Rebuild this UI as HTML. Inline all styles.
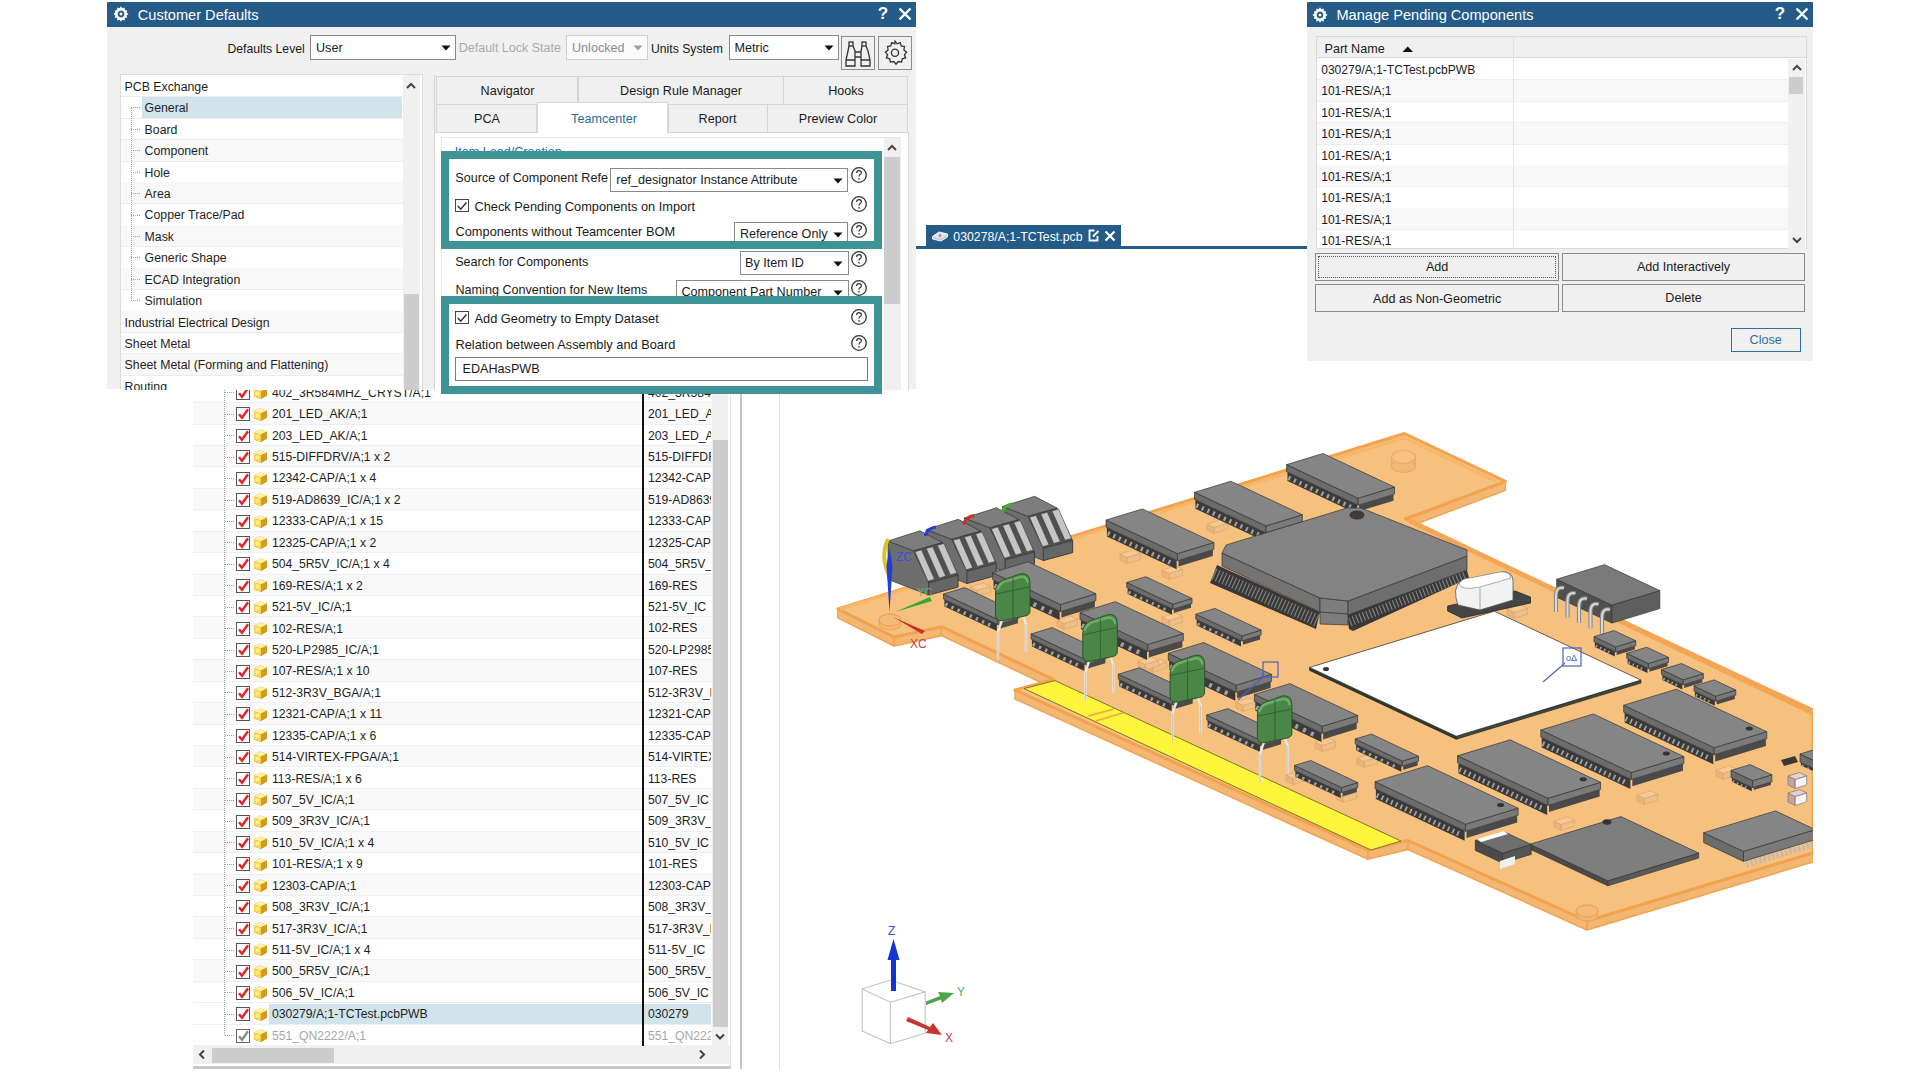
<!DOCTYPE html><html><head><meta charset="utf-8"><style>html,body{margin:0;padding:0;width:1920px;height:1080px;overflow:hidden;background:#fff;font-family:"Liberation Sans", sans-serif;position:relative}div{box-sizing:border-box}</style></head><body>
<div style="position:absolute;left:193px;top:390px;width:538px;height:679px;overflow:hidden;background:#fff">
<div style="position:absolute;left:0.00px;top:12.13px;width:519.00px;height:1.00px;background:#efefef"></div>
<div style="position:absolute;left:32.00px;top:2.40px;width:9.00px;height:1.00px;border-top:1px dotted #a0a0a0"></div>
<div style="position:absolute;left:42.50px;top:-4.00px;width:14.00px;height:14.00px;border:1.6px solid #555;background:#fff"></div>
<svg width="14" height="14" viewBox="0 0 14 14" style="position:absolute;left:42.50px;top:-4.00px"><path d="M3 7.2 L6 10.8 L12 2.2" fill="none" stroke="#e8202a" stroke-width="2.4"/></svg>
<div style="position:absolute;left:59.50px;top:-4.80px;width:15px;height:15px"><svg width="15" height="15" viewBox="0 0 15 15" style="position:absolute;left:0;top:0"><path d="M1 4.5 L7 1.5 L14 3.5 L14 10.5 L8 14 L1 11.5 Z" fill="#c9941c"/><path d="M1 4.5 L7 1.5 L14 3.5 L8 6.5 Z" fill="#fff2a0"/><path d="M1 4.5 L8 6.5 L8 14 L1 11.5 Z" fill="#f5d44a"/><path d="M8 6.5 L14 3.5 L14 10.5 L8 14 Z" fill="#d49a20"/><rect x="2.5" y="6.5" width="4" height="4" fill="#fff6b8" opacity="0.7"/></svg></div>
<div style="position:absolute;left:78.90px;top:-3.23px;font-size:12.2px;line-height:12.2px;color:#1e1e1e;white-space:pre;letter-spacing:0px;">402_3R584MHZ_CRYST/A;1</div>
<div style="position:absolute;left:454.90px;top:-8.30px;width:63px;height:21.43px;overflow:hidden">
<div style="position:absolute;left:0.00px;top:5.07px;font-size:12.2px;line-height:12.2px;color:#1e1e1e;white-space:pre;letter-spacing:0px;">402_3R584MHZ</div>
</div>
<div style="position:absolute;left:0.00px;top:13.13px;width:519.00px;height:21.43px;background:#f9f9f9"></div>
<div style="position:absolute;left:0.00px;top:33.56px;width:519.00px;height:1.00px;background:#efefef"></div>
<div style="position:absolute;left:32.00px;top:23.83px;width:9.00px;height:1.00px;border-top:1px dotted #a0a0a0"></div>
<div style="position:absolute;left:42.50px;top:17.43px;width:14.00px;height:14.00px;border:1.6px solid #555;background:#fff"></div>
<svg width="14" height="14" viewBox="0 0 14 14" style="position:absolute;left:42.50px;top:17.43px"><path d="M3 7.2 L6 10.8 L12 2.2" fill="none" stroke="#e8202a" stroke-width="2.4"/></svg>
<div style="position:absolute;left:59.50px;top:16.63px;width:15px;height:15px"><svg width="15" height="15" viewBox="0 0 15 15" style="position:absolute;left:0;top:0"><path d="M1 4.5 L7 1.5 L14 3.5 L14 10.5 L8 14 L1 11.5 Z" fill="#c9941c"/><path d="M1 4.5 L7 1.5 L14 3.5 L8 6.5 Z" fill="#fff2a0"/><path d="M1 4.5 L8 6.5 L8 14 L1 11.5 Z" fill="#f5d44a"/><path d="M8 6.5 L14 3.5 L14 10.5 L8 14 Z" fill="#d49a20"/><rect x="2.5" y="6.5" width="4" height="4" fill="#fff6b8" opacity="0.7"/></svg></div>
<div style="position:absolute;left:78.90px;top:18.20px;font-size:12.2px;line-height:12.2px;color:#1e1e1e;white-space:pre;letter-spacing:0px;">201_LED_AK/A;1</div>
<div style="position:absolute;left:454.90px;top:13.13px;width:63px;height:21.43px;overflow:hidden">
<div style="position:absolute;left:0.00px;top:5.07px;font-size:12.2px;line-height:12.2px;color:#1e1e1e;white-space:pre;letter-spacing:0px;">201_LED_AK</div>
</div>
<div style="position:absolute;left:0.00px;top:54.99px;width:519.00px;height:1.00px;background:#efefef"></div>
<div style="position:absolute;left:32.00px;top:45.26px;width:9.00px;height:1.00px;border-top:1px dotted #a0a0a0"></div>
<div style="position:absolute;left:42.50px;top:38.86px;width:14.00px;height:14.00px;border:1.6px solid #555;background:#fff"></div>
<svg width="14" height="14" viewBox="0 0 14 14" style="position:absolute;left:42.50px;top:38.86px"><path d="M3 7.2 L6 10.8 L12 2.2" fill="none" stroke="#e8202a" stroke-width="2.4"/></svg>
<div style="position:absolute;left:59.50px;top:38.06px;width:15px;height:15px"><svg width="15" height="15" viewBox="0 0 15 15" style="position:absolute;left:0;top:0"><path d="M1 4.5 L7 1.5 L14 3.5 L14 10.5 L8 14 L1 11.5 Z" fill="#c9941c"/><path d="M1 4.5 L7 1.5 L14 3.5 L8 6.5 Z" fill="#fff2a0"/><path d="M1 4.5 L8 6.5 L8 14 L1 11.5 Z" fill="#f5d44a"/><path d="M8 6.5 L14 3.5 L14 10.5 L8 14 Z" fill="#d49a20"/><rect x="2.5" y="6.5" width="4" height="4" fill="#fff6b8" opacity="0.7"/></svg></div>
<div style="position:absolute;left:78.90px;top:39.63px;font-size:12.2px;line-height:12.2px;color:#1e1e1e;white-space:pre;letter-spacing:0px;">203_LED_AK/A;1</div>
<div style="position:absolute;left:454.90px;top:34.56px;width:63px;height:21.43px;overflow:hidden">
<div style="position:absolute;left:0.00px;top:5.07px;font-size:12.2px;line-height:12.2px;color:#1e1e1e;white-space:pre;letter-spacing:0px;">203_LED_AK</div>
</div>
<div style="position:absolute;left:0.00px;top:55.99px;width:519.00px;height:21.43px;background:#f9f9f9"></div>
<div style="position:absolute;left:0.00px;top:76.42px;width:519.00px;height:1.00px;background:#efefef"></div>
<div style="position:absolute;left:32.00px;top:66.69px;width:9.00px;height:1.00px;border-top:1px dotted #a0a0a0"></div>
<div style="position:absolute;left:42.50px;top:60.29px;width:14.00px;height:14.00px;border:1.6px solid #555;background:#fff"></div>
<svg width="14" height="14" viewBox="0 0 14 14" style="position:absolute;left:42.50px;top:60.29px"><path d="M3 7.2 L6 10.8 L12 2.2" fill="none" stroke="#e8202a" stroke-width="2.4"/></svg>
<div style="position:absolute;left:59.50px;top:59.49px;width:15px;height:15px"><svg width="15" height="15" viewBox="0 0 15 15" style="position:absolute;left:0;top:0"><path d="M1 4.5 L7 1.5 L14 3.5 L14 10.5 L8 14 L1 11.5 Z" fill="#c9941c"/><path d="M1 4.5 L7 1.5 L14 3.5 L8 6.5 Z" fill="#fff2a0"/><path d="M1 4.5 L8 6.5 L8 14 L1 11.5 Z" fill="#f5d44a"/><path d="M8 6.5 L14 3.5 L14 10.5 L8 14 Z" fill="#d49a20"/><rect x="2.5" y="6.5" width="4" height="4" fill="#fff6b8" opacity="0.7"/></svg></div>
<div style="position:absolute;left:78.90px;top:61.06px;font-size:12.2px;line-height:12.2px;color:#1e1e1e;white-space:pre;letter-spacing:0px;">515-DIFFDRV/A;1 x 2</div>
<div style="position:absolute;left:454.90px;top:55.99px;width:63px;height:21.43px;overflow:hidden">
<div style="position:absolute;left:0.00px;top:5.07px;font-size:12.2px;line-height:12.2px;color:#1e1e1e;white-space:pre;letter-spacing:0px;">515-DIFFDRV</div>
</div>
<div style="position:absolute;left:0.00px;top:97.85px;width:519.00px;height:1.00px;background:#efefef"></div>
<div style="position:absolute;left:32.00px;top:88.12px;width:9.00px;height:1.00px;border-top:1px dotted #a0a0a0"></div>
<div style="position:absolute;left:42.50px;top:81.72px;width:14.00px;height:14.00px;border:1.6px solid #555;background:#fff"></div>
<svg width="14" height="14" viewBox="0 0 14 14" style="position:absolute;left:42.50px;top:81.72px"><path d="M3 7.2 L6 10.8 L12 2.2" fill="none" stroke="#e8202a" stroke-width="2.4"/></svg>
<div style="position:absolute;left:59.50px;top:80.92px;width:15px;height:15px"><svg width="15" height="15" viewBox="0 0 15 15" style="position:absolute;left:0;top:0"><path d="M1 4.5 L7 1.5 L14 3.5 L14 10.5 L8 14 L1 11.5 Z" fill="#c9941c"/><path d="M1 4.5 L7 1.5 L14 3.5 L8 6.5 Z" fill="#fff2a0"/><path d="M1 4.5 L8 6.5 L8 14 L1 11.5 Z" fill="#f5d44a"/><path d="M8 6.5 L14 3.5 L14 10.5 L8 14 Z" fill="#d49a20"/><rect x="2.5" y="6.5" width="4" height="4" fill="#fff6b8" opacity="0.7"/></svg></div>
<div style="position:absolute;left:78.90px;top:82.49px;font-size:12.2px;line-height:12.2px;color:#1e1e1e;white-space:pre;letter-spacing:0px;">12342-CAP/A;1 x 4</div>
<div style="position:absolute;left:454.90px;top:77.42px;width:63px;height:21.43px;overflow:hidden">
<div style="position:absolute;left:0.00px;top:5.07px;font-size:12.2px;line-height:12.2px;color:#1e1e1e;white-space:pre;letter-spacing:0px;">12342-CAP</div>
</div>
<div style="position:absolute;left:0.00px;top:98.85px;width:519.00px;height:21.43px;background:#f9f9f9"></div>
<div style="position:absolute;left:0.00px;top:119.28px;width:519.00px;height:1.00px;background:#efefef"></div>
<div style="position:absolute;left:32.00px;top:109.55px;width:9.00px;height:1.00px;border-top:1px dotted #a0a0a0"></div>
<div style="position:absolute;left:42.50px;top:103.15px;width:14.00px;height:14.00px;border:1.6px solid #555;background:#fff"></div>
<svg width="14" height="14" viewBox="0 0 14 14" style="position:absolute;left:42.50px;top:103.15px"><path d="M3 7.2 L6 10.8 L12 2.2" fill="none" stroke="#e8202a" stroke-width="2.4"/></svg>
<div style="position:absolute;left:59.50px;top:102.35px;width:15px;height:15px"><svg width="15" height="15" viewBox="0 0 15 15" style="position:absolute;left:0;top:0"><path d="M1 4.5 L7 1.5 L14 3.5 L14 10.5 L8 14 L1 11.5 Z" fill="#c9941c"/><path d="M1 4.5 L7 1.5 L14 3.5 L8 6.5 Z" fill="#fff2a0"/><path d="M1 4.5 L8 6.5 L8 14 L1 11.5 Z" fill="#f5d44a"/><path d="M8 6.5 L14 3.5 L14 10.5 L8 14 Z" fill="#d49a20"/><rect x="2.5" y="6.5" width="4" height="4" fill="#fff6b8" opacity="0.7"/></svg></div>
<div style="position:absolute;left:78.90px;top:103.92px;font-size:12.2px;line-height:12.2px;color:#1e1e1e;white-space:pre;letter-spacing:0px;">519-AD8639_IC/A;1 x 2</div>
<div style="position:absolute;left:454.90px;top:98.85px;width:63px;height:21.43px;overflow:hidden">
<div style="position:absolute;left:0.00px;top:5.07px;font-size:12.2px;line-height:12.2px;color:#1e1e1e;white-space:pre;letter-spacing:0px;">519-AD8639</div>
</div>
<div style="position:absolute;left:0.00px;top:140.71px;width:519.00px;height:1.00px;background:#efefef"></div>
<div style="position:absolute;left:32.00px;top:130.98px;width:9.00px;height:1.00px;border-top:1px dotted #a0a0a0"></div>
<div style="position:absolute;left:42.50px;top:124.58px;width:14.00px;height:14.00px;border:1.6px solid #555;background:#fff"></div>
<svg width="14" height="14" viewBox="0 0 14 14" style="position:absolute;left:42.50px;top:124.58px"><path d="M3 7.2 L6 10.8 L12 2.2" fill="none" stroke="#e8202a" stroke-width="2.4"/></svg>
<div style="position:absolute;left:59.50px;top:123.78px;width:15px;height:15px"><svg width="15" height="15" viewBox="0 0 15 15" style="position:absolute;left:0;top:0"><path d="M1 4.5 L7 1.5 L14 3.5 L14 10.5 L8 14 L1 11.5 Z" fill="#c9941c"/><path d="M1 4.5 L7 1.5 L14 3.5 L8 6.5 Z" fill="#fff2a0"/><path d="M1 4.5 L8 6.5 L8 14 L1 11.5 Z" fill="#f5d44a"/><path d="M8 6.5 L14 3.5 L14 10.5 L8 14 Z" fill="#d49a20"/><rect x="2.5" y="6.5" width="4" height="4" fill="#fff6b8" opacity="0.7"/></svg></div>
<div style="position:absolute;left:78.90px;top:125.35px;font-size:12.2px;line-height:12.2px;color:#1e1e1e;white-space:pre;letter-spacing:0px;">12333-CAP/A;1 x 15</div>
<div style="position:absolute;left:454.90px;top:120.28px;width:63px;height:21.43px;overflow:hidden">
<div style="position:absolute;left:0.00px;top:5.07px;font-size:12.2px;line-height:12.2px;color:#1e1e1e;white-space:pre;letter-spacing:0px;">12333-CAP</div>
</div>
<div style="position:absolute;left:0.00px;top:141.71px;width:519.00px;height:21.43px;background:#f9f9f9"></div>
<div style="position:absolute;left:0.00px;top:162.14px;width:519.00px;height:1.00px;background:#efefef"></div>
<div style="position:absolute;left:32.00px;top:152.41px;width:9.00px;height:1.00px;border-top:1px dotted #a0a0a0"></div>
<div style="position:absolute;left:42.50px;top:146.01px;width:14.00px;height:14.00px;border:1.6px solid #555;background:#fff"></div>
<svg width="14" height="14" viewBox="0 0 14 14" style="position:absolute;left:42.50px;top:146.01px"><path d="M3 7.2 L6 10.8 L12 2.2" fill="none" stroke="#e8202a" stroke-width="2.4"/></svg>
<div style="position:absolute;left:59.50px;top:145.21px;width:15px;height:15px"><svg width="15" height="15" viewBox="0 0 15 15" style="position:absolute;left:0;top:0"><path d="M1 4.5 L7 1.5 L14 3.5 L14 10.5 L8 14 L1 11.5 Z" fill="#c9941c"/><path d="M1 4.5 L7 1.5 L14 3.5 L8 6.5 Z" fill="#fff2a0"/><path d="M1 4.5 L8 6.5 L8 14 L1 11.5 Z" fill="#f5d44a"/><path d="M8 6.5 L14 3.5 L14 10.5 L8 14 Z" fill="#d49a20"/><rect x="2.5" y="6.5" width="4" height="4" fill="#fff6b8" opacity="0.7"/></svg></div>
<div style="position:absolute;left:78.90px;top:146.78px;font-size:12.2px;line-height:12.2px;color:#1e1e1e;white-space:pre;letter-spacing:0px;">12325-CAP/A;1 x 2</div>
<div style="position:absolute;left:454.90px;top:141.71px;width:63px;height:21.43px;overflow:hidden">
<div style="position:absolute;left:0.00px;top:5.07px;font-size:12.2px;line-height:12.2px;color:#1e1e1e;white-space:pre;letter-spacing:0px;">12325-CAP</div>
</div>
<div style="position:absolute;left:0.00px;top:183.57px;width:519.00px;height:1.00px;background:#efefef"></div>
<div style="position:absolute;left:32.00px;top:173.84px;width:9.00px;height:1.00px;border-top:1px dotted #a0a0a0"></div>
<div style="position:absolute;left:42.50px;top:167.44px;width:14.00px;height:14.00px;border:1.6px solid #555;background:#fff"></div>
<svg width="14" height="14" viewBox="0 0 14 14" style="position:absolute;left:42.50px;top:167.44px"><path d="M3 7.2 L6 10.8 L12 2.2" fill="none" stroke="#e8202a" stroke-width="2.4"/></svg>
<div style="position:absolute;left:59.50px;top:166.64px;width:15px;height:15px"><svg width="15" height="15" viewBox="0 0 15 15" style="position:absolute;left:0;top:0"><path d="M1 4.5 L7 1.5 L14 3.5 L14 10.5 L8 14 L1 11.5 Z" fill="#c9941c"/><path d="M1 4.5 L7 1.5 L14 3.5 L8 6.5 Z" fill="#fff2a0"/><path d="M1 4.5 L8 6.5 L8 14 L1 11.5 Z" fill="#f5d44a"/><path d="M8 6.5 L14 3.5 L14 10.5 L8 14 Z" fill="#d49a20"/><rect x="2.5" y="6.5" width="4" height="4" fill="#fff6b8" opacity="0.7"/></svg></div>
<div style="position:absolute;left:78.90px;top:168.21px;font-size:12.2px;line-height:12.2px;color:#1e1e1e;white-space:pre;letter-spacing:0px;">504_5R5V_IC/A;1 x 4</div>
<div style="position:absolute;left:454.90px;top:163.14px;width:63px;height:21.43px;overflow:hidden">
<div style="position:absolute;left:0.00px;top:5.07px;font-size:12.2px;line-height:12.2px;color:#1e1e1e;white-space:pre;letter-spacing:0px;">504_5R5V_IC</div>
</div>
<div style="position:absolute;left:0.00px;top:184.57px;width:519.00px;height:21.43px;background:#f9f9f9"></div>
<div style="position:absolute;left:0.00px;top:205.00px;width:519.00px;height:1.00px;background:#efefef"></div>
<div style="position:absolute;left:32.00px;top:195.27px;width:9.00px;height:1.00px;border-top:1px dotted #a0a0a0"></div>
<div style="position:absolute;left:42.50px;top:188.87px;width:14.00px;height:14.00px;border:1.6px solid #555;background:#fff"></div>
<svg width="14" height="14" viewBox="0 0 14 14" style="position:absolute;left:42.50px;top:188.87px"><path d="M3 7.2 L6 10.8 L12 2.2" fill="none" stroke="#e8202a" stroke-width="2.4"/></svg>
<div style="position:absolute;left:59.50px;top:188.07px;width:15px;height:15px"><svg width="15" height="15" viewBox="0 0 15 15" style="position:absolute;left:0;top:0"><path d="M1 4.5 L7 1.5 L14 3.5 L14 10.5 L8 14 L1 11.5 Z" fill="#c9941c"/><path d="M1 4.5 L7 1.5 L14 3.5 L8 6.5 Z" fill="#fff2a0"/><path d="M1 4.5 L8 6.5 L8 14 L1 11.5 Z" fill="#f5d44a"/><path d="M8 6.5 L14 3.5 L14 10.5 L8 14 Z" fill="#d49a20"/><rect x="2.5" y="6.5" width="4" height="4" fill="#fff6b8" opacity="0.7"/></svg></div>
<div style="position:absolute;left:78.90px;top:189.64px;font-size:12.2px;line-height:12.2px;color:#1e1e1e;white-space:pre;letter-spacing:0px;">169-RES/A;1 x 2</div>
<div style="position:absolute;left:454.90px;top:184.57px;width:63px;height:21.43px;overflow:hidden">
<div style="position:absolute;left:0.00px;top:5.07px;font-size:12.2px;line-height:12.2px;color:#1e1e1e;white-space:pre;letter-spacing:0px;">169-RES</div>
</div>
<div style="position:absolute;left:0.00px;top:226.43px;width:519.00px;height:1.00px;background:#efefef"></div>
<div style="position:absolute;left:32.00px;top:216.70px;width:9.00px;height:1.00px;border-top:1px dotted #a0a0a0"></div>
<div style="position:absolute;left:42.50px;top:210.30px;width:14.00px;height:14.00px;border:1.6px solid #555;background:#fff"></div>
<svg width="14" height="14" viewBox="0 0 14 14" style="position:absolute;left:42.50px;top:210.30px"><path d="M3 7.2 L6 10.8 L12 2.2" fill="none" stroke="#e8202a" stroke-width="2.4"/></svg>
<div style="position:absolute;left:59.50px;top:209.50px;width:15px;height:15px"><svg width="15" height="15" viewBox="0 0 15 15" style="position:absolute;left:0;top:0"><path d="M1 4.5 L7 1.5 L14 3.5 L14 10.5 L8 14 L1 11.5 Z" fill="#c9941c"/><path d="M1 4.5 L7 1.5 L14 3.5 L8 6.5 Z" fill="#fff2a0"/><path d="M1 4.5 L8 6.5 L8 14 L1 11.5 Z" fill="#f5d44a"/><path d="M8 6.5 L14 3.5 L14 10.5 L8 14 Z" fill="#d49a20"/><rect x="2.5" y="6.5" width="4" height="4" fill="#fff6b8" opacity="0.7"/></svg></div>
<div style="position:absolute;left:78.90px;top:211.07px;font-size:12.2px;line-height:12.2px;color:#1e1e1e;white-space:pre;letter-spacing:0px;">521-5V_IC/A;1</div>
<div style="position:absolute;left:454.90px;top:206.00px;width:63px;height:21.43px;overflow:hidden">
<div style="position:absolute;left:0.00px;top:5.07px;font-size:12.2px;line-height:12.2px;color:#1e1e1e;white-space:pre;letter-spacing:0px;">521-5V_IC</div>
</div>
<div style="position:absolute;left:0.00px;top:227.43px;width:519.00px;height:21.43px;background:#f9f9f9"></div>
<div style="position:absolute;left:0.00px;top:247.86px;width:519.00px;height:1.00px;background:#efefef"></div>
<div style="position:absolute;left:32.00px;top:238.13px;width:9.00px;height:1.00px;border-top:1px dotted #a0a0a0"></div>
<div style="position:absolute;left:42.50px;top:231.73px;width:14.00px;height:14.00px;border:1.6px solid #555;background:#fff"></div>
<svg width="14" height="14" viewBox="0 0 14 14" style="position:absolute;left:42.50px;top:231.73px"><path d="M3 7.2 L6 10.8 L12 2.2" fill="none" stroke="#e8202a" stroke-width="2.4"/></svg>
<div style="position:absolute;left:59.50px;top:230.93px;width:15px;height:15px"><svg width="15" height="15" viewBox="0 0 15 15" style="position:absolute;left:0;top:0"><path d="M1 4.5 L7 1.5 L14 3.5 L14 10.5 L8 14 L1 11.5 Z" fill="#c9941c"/><path d="M1 4.5 L7 1.5 L14 3.5 L8 6.5 Z" fill="#fff2a0"/><path d="M1 4.5 L8 6.5 L8 14 L1 11.5 Z" fill="#f5d44a"/><path d="M8 6.5 L14 3.5 L14 10.5 L8 14 Z" fill="#d49a20"/><rect x="2.5" y="6.5" width="4" height="4" fill="#fff6b8" opacity="0.7"/></svg></div>
<div style="position:absolute;left:78.90px;top:232.50px;font-size:12.2px;line-height:12.2px;color:#1e1e1e;white-space:pre;letter-spacing:0px;">102-RES/A;1</div>
<div style="position:absolute;left:454.90px;top:227.43px;width:63px;height:21.43px;overflow:hidden">
<div style="position:absolute;left:0.00px;top:5.07px;font-size:12.2px;line-height:12.2px;color:#1e1e1e;white-space:pre;letter-spacing:0px;">102-RES</div>
</div>
<div style="position:absolute;left:0.00px;top:269.29px;width:519.00px;height:1.00px;background:#efefef"></div>
<div style="position:absolute;left:32.00px;top:259.56px;width:9.00px;height:1.00px;border-top:1px dotted #a0a0a0"></div>
<div style="position:absolute;left:42.50px;top:253.16px;width:14.00px;height:14.00px;border:1.6px solid #555;background:#fff"></div>
<svg width="14" height="14" viewBox="0 0 14 14" style="position:absolute;left:42.50px;top:253.16px"><path d="M3 7.2 L6 10.8 L12 2.2" fill="none" stroke="#e8202a" stroke-width="2.4"/></svg>
<div style="position:absolute;left:59.50px;top:252.36px;width:15px;height:15px"><svg width="15" height="15" viewBox="0 0 15 15" style="position:absolute;left:0;top:0"><path d="M1 4.5 L7 1.5 L14 3.5 L14 10.5 L8 14 L1 11.5 Z" fill="#c9941c"/><path d="M1 4.5 L7 1.5 L14 3.5 L8 6.5 Z" fill="#fff2a0"/><path d="M1 4.5 L8 6.5 L8 14 L1 11.5 Z" fill="#f5d44a"/><path d="M8 6.5 L14 3.5 L14 10.5 L8 14 Z" fill="#d49a20"/><rect x="2.5" y="6.5" width="4" height="4" fill="#fff6b8" opacity="0.7"/></svg></div>
<div style="position:absolute;left:78.90px;top:253.93px;font-size:12.2px;line-height:12.2px;color:#1e1e1e;white-space:pre;letter-spacing:0px;">520-LP2985_IC/A;1</div>
<div style="position:absolute;left:454.90px;top:248.86px;width:63px;height:21.43px;overflow:hidden">
<div style="position:absolute;left:0.00px;top:5.07px;font-size:12.2px;line-height:12.2px;color:#1e1e1e;white-space:pre;letter-spacing:0px;">520-LP2985</div>
</div>
<div style="position:absolute;left:0.00px;top:270.29px;width:519.00px;height:21.43px;background:#f9f9f9"></div>
<div style="position:absolute;left:0.00px;top:290.72px;width:519.00px;height:1.00px;background:#efefef"></div>
<div style="position:absolute;left:32.00px;top:280.99px;width:9.00px;height:1.00px;border-top:1px dotted #a0a0a0"></div>
<div style="position:absolute;left:42.50px;top:274.59px;width:14.00px;height:14.00px;border:1.6px solid #555;background:#fff"></div>
<svg width="14" height="14" viewBox="0 0 14 14" style="position:absolute;left:42.50px;top:274.59px"><path d="M3 7.2 L6 10.8 L12 2.2" fill="none" stroke="#e8202a" stroke-width="2.4"/></svg>
<div style="position:absolute;left:59.50px;top:273.79px;width:15px;height:15px"><svg width="15" height="15" viewBox="0 0 15 15" style="position:absolute;left:0;top:0"><path d="M1 4.5 L7 1.5 L14 3.5 L14 10.5 L8 14 L1 11.5 Z" fill="#c9941c"/><path d="M1 4.5 L7 1.5 L14 3.5 L8 6.5 Z" fill="#fff2a0"/><path d="M1 4.5 L8 6.5 L8 14 L1 11.5 Z" fill="#f5d44a"/><path d="M8 6.5 L14 3.5 L14 10.5 L8 14 Z" fill="#d49a20"/><rect x="2.5" y="6.5" width="4" height="4" fill="#fff6b8" opacity="0.7"/></svg></div>
<div style="position:absolute;left:78.90px;top:275.36px;font-size:12.2px;line-height:12.2px;color:#1e1e1e;white-space:pre;letter-spacing:0px;">107-RES/A;1 x 10</div>
<div style="position:absolute;left:454.90px;top:270.29px;width:63px;height:21.43px;overflow:hidden">
<div style="position:absolute;left:0.00px;top:5.07px;font-size:12.2px;line-height:12.2px;color:#1e1e1e;white-space:pre;letter-spacing:0px;">107-RES</div>
</div>
<div style="position:absolute;left:0.00px;top:312.15px;width:519.00px;height:1.00px;background:#efefef"></div>
<div style="position:absolute;left:32.00px;top:302.42px;width:9.00px;height:1.00px;border-top:1px dotted #a0a0a0"></div>
<div style="position:absolute;left:42.50px;top:296.02px;width:14.00px;height:14.00px;border:1.6px solid #555;background:#fff"></div>
<svg width="14" height="14" viewBox="0 0 14 14" style="position:absolute;left:42.50px;top:296.02px"><path d="M3 7.2 L6 10.8 L12 2.2" fill="none" stroke="#e8202a" stroke-width="2.4"/></svg>
<div style="position:absolute;left:59.50px;top:295.22px;width:15px;height:15px"><svg width="15" height="15" viewBox="0 0 15 15" style="position:absolute;left:0;top:0"><path d="M1 4.5 L7 1.5 L14 3.5 L14 10.5 L8 14 L1 11.5 Z" fill="#c9941c"/><path d="M1 4.5 L7 1.5 L14 3.5 L8 6.5 Z" fill="#fff2a0"/><path d="M1 4.5 L8 6.5 L8 14 L1 11.5 Z" fill="#f5d44a"/><path d="M8 6.5 L14 3.5 L14 10.5 L8 14 Z" fill="#d49a20"/><rect x="2.5" y="6.5" width="4" height="4" fill="#fff6b8" opacity="0.7"/></svg></div>
<div style="position:absolute;left:78.90px;top:296.79px;font-size:12.2px;line-height:12.2px;color:#1e1e1e;white-space:pre;letter-spacing:0px;">512-3R3V_BGA/A;1</div>
<div style="position:absolute;left:454.90px;top:291.72px;width:63px;height:21.43px;overflow:hidden">
<div style="position:absolute;left:0.00px;top:5.07px;font-size:12.2px;line-height:12.2px;color:#1e1e1e;white-space:pre;letter-spacing:0px;">512-3R3V_BGA</div>
</div>
<div style="position:absolute;left:0.00px;top:313.15px;width:519.00px;height:21.43px;background:#f9f9f9"></div>
<div style="position:absolute;left:0.00px;top:333.58px;width:519.00px;height:1.00px;background:#efefef"></div>
<div style="position:absolute;left:32.00px;top:323.85px;width:9.00px;height:1.00px;border-top:1px dotted #a0a0a0"></div>
<div style="position:absolute;left:42.50px;top:317.45px;width:14.00px;height:14.00px;border:1.6px solid #555;background:#fff"></div>
<svg width="14" height="14" viewBox="0 0 14 14" style="position:absolute;left:42.50px;top:317.45px"><path d="M3 7.2 L6 10.8 L12 2.2" fill="none" stroke="#e8202a" stroke-width="2.4"/></svg>
<div style="position:absolute;left:59.50px;top:316.65px;width:15px;height:15px"><svg width="15" height="15" viewBox="0 0 15 15" style="position:absolute;left:0;top:0"><path d="M1 4.5 L7 1.5 L14 3.5 L14 10.5 L8 14 L1 11.5 Z" fill="#c9941c"/><path d="M1 4.5 L7 1.5 L14 3.5 L8 6.5 Z" fill="#fff2a0"/><path d="M1 4.5 L8 6.5 L8 14 L1 11.5 Z" fill="#f5d44a"/><path d="M8 6.5 L14 3.5 L14 10.5 L8 14 Z" fill="#d49a20"/><rect x="2.5" y="6.5" width="4" height="4" fill="#fff6b8" opacity="0.7"/></svg></div>
<div style="position:absolute;left:78.90px;top:318.22px;font-size:12.2px;line-height:12.2px;color:#1e1e1e;white-space:pre;letter-spacing:0px;">12321-CAP/A;1 x 11</div>
<div style="position:absolute;left:454.90px;top:313.15px;width:63px;height:21.43px;overflow:hidden">
<div style="position:absolute;left:0.00px;top:5.07px;font-size:12.2px;line-height:12.2px;color:#1e1e1e;white-space:pre;letter-spacing:0px;">12321-CAP</div>
</div>
<div style="position:absolute;left:0.00px;top:355.01px;width:519.00px;height:1.00px;background:#efefef"></div>
<div style="position:absolute;left:32.00px;top:345.28px;width:9.00px;height:1.00px;border-top:1px dotted #a0a0a0"></div>
<div style="position:absolute;left:42.50px;top:338.88px;width:14.00px;height:14.00px;border:1.6px solid #555;background:#fff"></div>
<svg width="14" height="14" viewBox="0 0 14 14" style="position:absolute;left:42.50px;top:338.88px"><path d="M3 7.2 L6 10.8 L12 2.2" fill="none" stroke="#e8202a" stroke-width="2.4"/></svg>
<div style="position:absolute;left:59.50px;top:338.08px;width:15px;height:15px"><svg width="15" height="15" viewBox="0 0 15 15" style="position:absolute;left:0;top:0"><path d="M1 4.5 L7 1.5 L14 3.5 L14 10.5 L8 14 L1 11.5 Z" fill="#c9941c"/><path d="M1 4.5 L7 1.5 L14 3.5 L8 6.5 Z" fill="#fff2a0"/><path d="M1 4.5 L8 6.5 L8 14 L1 11.5 Z" fill="#f5d44a"/><path d="M8 6.5 L14 3.5 L14 10.5 L8 14 Z" fill="#d49a20"/><rect x="2.5" y="6.5" width="4" height="4" fill="#fff6b8" opacity="0.7"/></svg></div>
<div style="position:absolute;left:78.90px;top:339.65px;font-size:12.2px;line-height:12.2px;color:#1e1e1e;white-space:pre;letter-spacing:0px;">12335-CAP/A;1 x 6</div>
<div style="position:absolute;left:454.90px;top:334.58px;width:63px;height:21.43px;overflow:hidden">
<div style="position:absolute;left:0.00px;top:5.07px;font-size:12.2px;line-height:12.2px;color:#1e1e1e;white-space:pre;letter-spacing:0px;">12335-CAP</div>
</div>
<div style="position:absolute;left:0.00px;top:356.01px;width:519.00px;height:21.43px;background:#f9f9f9"></div>
<div style="position:absolute;left:0.00px;top:376.44px;width:519.00px;height:1.00px;background:#efefef"></div>
<div style="position:absolute;left:32.00px;top:366.71px;width:9.00px;height:1.00px;border-top:1px dotted #a0a0a0"></div>
<div style="position:absolute;left:42.50px;top:360.31px;width:14.00px;height:14.00px;border:1.6px solid #555;background:#fff"></div>
<svg width="14" height="14" viewBox="0 0 14 14" style="position:absolute;left:42.50px;top:360.31px"><path d="M3 7.2 L6 10.8 L12 2.2" fill="none" stroke="#e8202a" stroke-width="2.4"/></svg>
<div style="position:absolute;left:59.50px;top:359.51px;width:15px;height:15px"><svg width="15" height="15" viewBox="0 0 15 15" style="position:absolute;left:0;top:0"><path d="M1 4.5 L7 1.5 L14 3.5 L14 10.5 L8 14 L1 11.5 Z" fill="#c9941c"/><path d="M1 4.5 L7 1.5 L14 3.5 L8 6.5 Z" fill="#fff2a0"/><path d="M1 4.5 L8 6.5 L8 14 L1 11.5 Z" fill="#f5d44a"/><path d="M8 6.5 L14 3.5 L14 10.5 L8 14 Z" fill="#d49a20"/><rect x="2.5" y="6.5" width="4" height="4" fill="#fff6b8" opacity="0.7"/></svg></div>
<div style="position:absolute;left:78.90px;top:361.08px;font-size:12.2px;line-height:12.2px;color:#1e1e1e;white-space:pre;letter-spacing:0px;">514-VIRTEX-FPGA/A;1</div>
<div style="position:absolute;left:454.90px;top:356.01px;width:63px;height:21.43px;overflow:hidden">
<div style="position:absolute;left:0.00px;top:5.07px;font-size:12.2px;line-height:12.2px;color:#1e1e1e;white-space:pre;letter-spacing:0px;">514-VIRTEX</div>
</div>
<div style="position:absolute;left:0.00px;top:397.87px;width:519.00px;height:1.00px;background:#efefef"></div>
<div style="position:absolute;left:32.00px;top:388.14px;width:9.00px;height:1.00px;border-top:1px dotted #a0a0a0"></div>
<div style="position:absolute;left:42.50px;top:381.74px;width:14.00px;height:14.00px;border:1.6px solid #555;background:#fff"></div>
<svg width="14" height="14" viewBox="0 0 14 14" style="position:absolute;left:42.50px;top:381.74px"><path d="M3 7.2 L6 10.8 L12 2.2" fill="none" stroke="#e8202a" stroke-width="2.4"/></svg>
<div style="position:absolute;left:59.50px;top:380.94px;width:15px;height:15px"><svg width="15" height="15" viewBox="0 0 15 15" style="position:absolute;left:0;top:0"><path d="M1 4.5 L7 1.5 L14 3.5 L14 10.5 L8 14 L1 11.5 Z" fill="#c9941c"/><path d="M1 4.5 L7 1.5 L14 3.5 L8 6.5 Z" fill="#fff2a0"/><path d="M1 4.5 L8 6.5 L8 14 L1 11.5 Z" fill="#f5d44a"/><path d="M8 6.5 L14 3.5 L14 10.5 L8 14 Z" fill="#d49a20"/><rect x="2.5" y="6.5" width="4" height="4" fill="#fff6b8" opacity="0.7"/></svg></div>
<div style="position:absolute;left:78.90px;top:382.51px;font-size:12.2px;line-height:12.2px;color:#1e1e1e;white-space:pre;letter-spacing:0px;">113-RES/A;1 x 6</div>
<div style="position:absolute;left:454.90px;top:377.44px;width:63px;height:21.43px;overflow:hidden">
<div style="position:absolute;left:0.00px;top:5.07px;font-size:12.2px;line-height:12.2px;color:#1e1e1e;white-space:pre;letter-spacing:0px;">113-RES</div>
</div>
<div style="position:absolute;left:0.00px;top:398.87px;width:519.00px;height:21.43px;background:#f9f9f9"></div>
<div style="position:absolute;left:0.00px;top:419.30px;width:519.00px;height:1.00px;background:#efefef"></div>
<div style="position:absolute;left:32.00px;top:409.57px;width:9.00px;height:1.00px;border-top:1px dotted #a0a0a0"></div>
<div style="position:absolute;left:42.50px;top:403.17px;width:14.00px;height:14.00px;border:1.6px solid #555;background:#fff"></div>
<svg width="14" height="14" viewBox="0 0 14 14" style="position:absolute;left:42.50px;top:403.17px"><path d="M3 7.2 L6 10.8 L12 2.2" fill="none" stroke="#e8202a" stroke-width="2.4"/></svg>
<div style="position:absolute;left:59.50px;top:402.37px;width:15px;height:15px"><svg width="15" height="15" viewBox="0 0 15 15" style="position:absolute;left:0;top:0"><path d="M1 4.5 L7 1.5 L14 3.5 L14 10.5 L8 14 L1 11.5 Z" fill="#c9941c"/><path d="M1 4.5 L7 1.5 L14 3.5 L8 6.5 Z" fill="#fff2a0"/><path d="M1 4.5 L8 6.5 L8 14 L1 11.5 Z" fill="#f5d44a"/><path d="M8 6.5 L14 3.5 L14 10.5 L8 14 Z" fill="#d49a20"/><rect x="2.5" y="6.5" width="4" height="4" fill="#fff6b8" opacity="0.7"/></svg></div>
<div style="position:absolute;left:78.90px;top:403.94px;font-size:12.2px;line-height:12.2px;color:#1e1e1e;white-space:pre;letter-spacing:0px;">507_5V_IC/A;1</div>
<div style="position:absolute;left:454.90px;top:398.87px;width:63px;height:21.43px;overflow:hidden">
<div style="position:absolute;left:0.00px;top:5.07px;font-size:12.2px;line-height:12.2px;color:#1e1e1e;white-space:pre;letter-spacing:0px;">507_5V_IC</div>
</div>
<div style="position:absolute;left:0.00px;top:440.73px;width:519.00px;height:1.00px;background:#efefef"></div>
<div style="position:absolute;left:32.00px;top:431.00px;width:9.00px;height:1.00px;border-top:1px dotted #a0a0a0"></div>
<div style="position:absolute;left:42.50px;top:424.60px;width:14.00px;height:14.00px;border:1.6px solid #555;background:#fff"></div>
<svg width="14" height="14" viewBox="0 0 14 14" style="position:absolute;left:42.50px;top:424.60px"><path d="M3 7.2 L6 10.8 L12 2.2" fill="none" stroke="#e8202a" stroke-width="2.4"/></svg>
<div style="position:absolute;left:59.50px;top:423.80px;width:15px;height:15px"><svg width="15" height="15" viewBox="0 0 15 15" style="position:absolute;left:0;top:0"><path d="M1 4.5 L7 1.5 L14 3.5 L14 10.5 L8 14 L1 11.5 Z" fill="#c9941c"/><path d="M1 4.5 L7 1.5 L14 3.5 L8 6.5 Z" fill="#fff2a0"/><path d="M1 4.5 L8 6.5 L8 14 L1 11.5 Z" fill="#f5d44a"/><path d="M8 6.5 L14 3.5 L14 10.5 L8 14 Z" fill="#d49a20"/><rect x="2.5" y="6.5" width="4" height="4" fill="#fff6b8" opacity="0.7"/></svg></div>
<div style="position:absolute;left:78.90px;top:425.37px;font-size:12.2px;line-height:12.2px;color:#1e1e1e;white-space:pre;letter-spacing:0px;">509_3R3V_IC/A;1</div>
<div style="position:absolute;left:454.90px;top:420.30px;width:63px;height:21.43px;overflow:hidden">
<div style="position:absolute;left:0.00px;top:5.07px;font-size:12.2px;line-height:12.2px;color:#1e1e1e;white-space:pre;letter-spacing:0px;">509_3R3V_IC</div>
</div>
<div style="position:absolute;left:0.00px;top:441.73px;width:519.00px;height:21.43px;background:#f9f9f9"></div>
<div style="position:absolute;left:0.00px;top:462.16px;width:519.00px;height:1.00px;background:#efefef"></div>
<div style="position:absolute;left:32.00px;top:452.43px;width:9.00px;height:1.00px;border-top:1px dotted #a0a0a0"></div>
<div style="position:absolute;left:42.50px;top:446.03px;width:14.00px;height:14.00px;border:1.6px solid #555;background:#fff"></div>
<svg width="14" height="14" viewBox="0 0 14 14" style="position:absolute;left:42.50px;top:446.03px"><path d="M3 7.2 L6 10.8 L12 2.2" fill="none" stroke="#e8202a" stroke-width="2.4"/></svg>
<div style="position:absolute;left:59.50px;top:445.23px;width:15px;height:15px"><svg width="15" height="15" viewBox="0 0 15 15" style="position:absolute;left:0;top:0"><path d="M1 4.5 L7 1.5 L14 3.5 L14 10.5 L8 14 L1 11.5 Z" fill="#c9941c"/><path d="M1 4.5 L7 1.5 L14 3.5 L8 6.5 Z" fill="#fff2a0"/><path d="M1 4.5 L8 6.5 L8 14 L1 11.5 Z" fill="#f5d44a"/><path d="M8 6.5 L14 3.5 L14 10.5 L8 14 Z" fill="#d49a20"/><rect x="2.5" y="6.5" width="4" height="4" fill="#fff6b8" opacity="0.7"/></svg></div>
<div style="position:absolute;left:78.90px;top:446.80px;font-size:12.2px;line-height:12.2px;color:#1e1e1e;white-space:pre;letter-spacing:0px;">510_5V_IC/A;1 x 4</div>
<div style="position:absolute;left:454.90px;top:441.73px;width:63px;height:21.43px;overflow:hidden">
<div style="position:absolute;left:0.00px;top:5.07px;font-size:12.2px;line-height:12.2px;color:#1e1e1e;white-space:pre;letter-spacing:0px;">510_5V_IC</div>
</div>
<div style="position:absolute;left:0.00px;top:483.59px;width:519.00px;height:1.00px;background:#efefef"></div>
<div style="position:absolute;left:32.00px;top:473.86px;width:9.00px;height:1.00px;border-top:1px dotted #a0a0a0"></div>
<div style="position:absolute;left:42.50px;top:467.46px;width:14.00px;height:14.00px;border:1.6px solid #555;background:#fff"></div>
<svg width="14" height="14" viewBox="0 0 14 14" style="position:absolute;left:42.50px;top:467.46px"><path d="M3 7.2 L6 10.8 L12 2.2" fill="none" stroke="#e8202a" stroke-width="2.4"/></svg>
<div style="position:absolute;left:59.50px;top:466.66px;width:15px;height:15px"><svg width="15" height="15" viewBox="0 0 15 15" style="position:absolute;left:0;top:0"><path d="M1 4.5 L7 1.5 L14 3.5 L14 10.5 L8 14 L1 11.5 Z" fill="#c9941c"/><path d="M1 4.5 L7 1.5 L14 3.5 L8 6.5 Z" fill="#fff2a0"/><path d="M1 4.5 L8 6.5 L8 14 L1 11.5 Z" fill="#f5d44a"/><path d="M8 6.5 L14 3.5 L14 10.5 L8 14 Z" fill="#d49a20"/><rect x="2.5" y="6.5" width="4" height="4" fill="#fff6b8" opacity="0.7"/></svg></div>
<div style="position:absolute;left:78.90px;top:468.23px;font-size:12.2px;line-height:12.2px;color:#1e1e1e;white-space:pre;letter-spacing:0px;">101-RES/A;1 x 9</div>
<div style="position:absolute;left:454.90px;top:463.16px;width:63px;height:21.43px;overflow:hidden">
<div style="position:absolute;left:0.00px;top:5.07px;font-size:12.2px;line-height:12.2px;color:#1e1e1e;white-space:pre;letter-spacing:0px;">101-RES</div>
</div>
<div style="position:absolute;left:0.00px;top:484.59px;width:519.00px;height:21.43px;background:#f9f9f9"></div>
<div style="position:absolute;left:0.00px;top:505.02px;width:519.00px;height:1.00px;background:#efefef"></div>
<div style="position:absolute;left:32.00px;top:495.29px;width:9.00px;height:1.00px;border-top:1px dotted #a0a0a0"></div>
<div style="position:absolute;left:42.50px;top:488.89px;width:14.00px;height:14.00px;border:1.6px solid #555;background:#fff"></div>
<svg width="14" height="14" viewBox="0 0 14 14" style="position:absolute;left:42.50px;top:488.89px"><path d="M3 7.2 L6 10.8 L12 2.2" fill="none" stroke="#e8202a" stroke-width="2.4"/></svg>
<div style="position:absolute;left:59.50px;top:488.09px;width:15px;height:15px"><svg width="15" height="15" viewBox="0 0 15 15" style="position:absolute;left:0;top:0"><path d="M1 4.5 L7 1.5 L14 3.5 L14 10.5 L8 14 L1 11.5 Z" fill="#c9941c"/><path d="M1 4.5 L7 1.5 L14 3.5 L8 6.5 Z" fill="#fff2a0"/><path d="M1 4.5 L8 6.5 L8 14 L1 11.5 Z" fill="#f5d44a"/><path d="M8 6.5 L14 3.5 L14 10.5 L8 14 Z" fill="#d49a20"/><rect x="2.5" y="6.5" width="4" height="4" fill="#fff6b8" opacity="0.7"/></svg></div>
<div style="position:absolute;left:78.90px;top:489.66px;font-size:12.2px;line-height:12.2px;color:#1e1e1e;white-space:pre;letter-spacing:0px;">12303-CAP/A;1</div>
<div style="position:absolute;left:454.90px;top:484.59px;width:63px;height:21.43px;overflow:hidden">
<div style="position:absolute;left:0.00px;top:5.07px;font-size:12.2px;line-height:12.2px;color:#1e1e1e;white-space:pre;letter-spacing:0px;">12303-CAP</div>
</div>
<div style="position:absolute;left:0.00px;top:526.45px;width:519.00px;height:1.00px;background:#efefef"></div>
<div style="position:absolute;left:32.00px;top:516.72px;width:9.00px;height:1.00px;border-top:1px dotted #a0a0a0"></div>
<div style="position:absolute;left:42.50px;top:510.32px;width:14.00px;height:14.00px;border:1.6px solid #555;background:#fff"></div>
<svg width="14" height="14" viewBox="0 0 14 14" style="position:absolute;left:42.50px;top:510.32px"><path d="M3 7.2 L6 10.8 L12 2.2" fill="none" stroke="#e8202a" stroke-width="2.4"/></svg>
<div style="position:absolute;left:59.50px;top:509.52px;width:15px;height:15px"><svg width="15" height="15" viewBox="0 0 15 15" style="position:absolute;left:0;top:0"><path d="M1 4.5 L7 1.5 L14 3.5 L14 10.5 L8 14 L1 11.5 Z" fill="#c9941c"/><path d="M1 4.5 L7 1.5 L14 3.5 L8 6.5 Z" fill="#fff2a0"/><path d="M1 4.5 L8 6.5 L8 14 L1 11.5 Z" fill="#f5d44a"/><path d="M8 6.5 L14 3.5 L14 10.5 L8 14 Z" fill="#d49a20"/><rect x="2.5" y="6.5" width="4" height="4" fill="#fff6b8" opacity="0.7"/></svg></div>
<div style="position:absolute;left:78.90px;top:511.09px;font-size:12.2px;line-height:12.2px;color:#1e1e1e;white-space:pre;letter-spacing:0px;">508_3R3V_IC/A;1</div>
<div style="position:absolute;left:454.90px;top:506.02px;width:63px;height:21.43px;overflow:hidden">
<div style="position:absolute;left:0.00px;top:5.07px;font-size:12.2px;line-height:12.2px;color:#1e1e1e;white-space:pre;letter-spacing:0px;">508_3R3V_IC</div>
</div>
<div style="position:absolute;left:0.00px;top:527.45px;width:519.00px;height:21.43px;background:#f9f9f9"></div>
<div style="position:absolute;left:0.00px;top:547.88px;width:519.00px;height:1.00px;background:#efefef"></div>
<div style="position:absolute;left:32.00px;top:538.15px;width:9.00px;height:1.00px;border-top:1px dotted #a0a0a0"></div>
<div style="position:absolute;left:42.50px;top:531.75px;width:14.00px;height:14.00px;border:1.6px solid #555;background:#fff"></div>
<svg width="14" height="14" viewBox="0 0 14 14" style="position:absolute;left:42.50px;top:531.75px"><path d="M3 7.2 L6 10.8 L12 2.2" fill="none" stroke="#e8202a" stroke-width="2.4"/></svg>
<div style="position:absolute;left:59.50px;top:530.95px;width:15px;height:15px"><svg width="15" height="15" viewBox="0 0 15 15" style="position:absolute;left:0;top:0"><path d="M1 4.5 L7 1.5 L14 3.5 L14 10.5 L8 14 L1 11.5 Z" fill="#c9941c"/><path d="M1 4.5 L7 1.5 L14 3.5 L8 6.5 Z" fill="#fff2a0"/><path d="M1 4.5 L8 6.5 L8 14 L1 11.5 Z" fill="#f5d44a"/><path d="M8 6.5 L14 3.5 L14 10.5 L8 14 Z" fill="#d49a20"/><rect x="2.5" y="6.5" width="4" height="4" fill="#fff6b8" opacity="0.7"/></svg></div>
<div style="position:absolute;left:78.90px;top:532.52px;font-size:12.2px;line-height:12.2px;color:#1e1e1e;white-space:pre;letter-spacing:0px;">517-3R3V_IC/A;1</div>
<div style="position:absolute;left:454.90px;top:527.45px;width:63px;height:21.43px;overflow:hidden">
<div style="position:absolute;left:0.00px;top:5.07px;font-size:12.2px;line-height:12.2px;color:#1e1e1e;white-space:pre;letter-spacing:0px;">517-3R3V_IC</div>
</div>
<div style="position:absolute;left:0.00px;top:569.31px;width:519.00px;height:1.00px;background:#efefef"></div>
<div style="position:absolute;left:32.00px;top:559.58px;width:9.00px;height:1.00px;border-top:1px dotted #a0a0a0"></div>
<div style="position:absolute;left:42.50px;top:553.18px;width:14.00px;height:14.00px;border:1.6px solid #555;background:#fff"></div>
<svg width="14" height="14" viewBox="0 0 14 14" style="position:absolute;left:42.50px;top:553.18px"><path d="M3 7.2 L6 10.8 L12 2.2" fill="none" stroke="#e8202a" stroke-width="2.4"/></svg>
<div style="position:absolute;left:59.50px;top:552.38px;width:15px;height:15px"><svg width="15" height="15" viewBox="0 0 15 15" style="position:absolute;left:0;top:0"><path d="M1 4.5 L7 1.5 L14 3.5 L14 10.5 L8 14 L1 11.5 Z" fill="#c9941c"/><path d="M1 4.5 L7 1.5 L14 3.5 L8 6.5 Z" fill="#fff2a0"/><path d="M1 4.5 L8 6.5 L8 14 L1 11.5 Z" fill="#f5d44a"/><path d="M8 6.5 L14 3.5 L14 10.5 L8 14 Z" fill="#d49a20"/><rect x="2.5" y="6.5" width="4" height="4" fill="#fff6b8" opacity="0.7"/></svg></div>
<div style="position:absolute;left:78.90px;top:553.95px;font-size:12.2px;line-height:12.2px;color:#1e1e1e;white-space:pre;letter-spacing:0px;">511-5V_IC/A;1 x 4</div>
<div style="position:absolute;left:454.90px;top:548.88px;width:63px;height:21.43px;overflow:hidden">
<div style="position:absolute;left:0.00px;top:5.07px;font-size:12.2px;line-height:12.2px;color:#1e1e1e;white-space:pre;letter-spacing:0px;">511-5V_IC</div>
</div>
<div style="position:absolute;left:0.00px;top:570.31px;width:519.00px;height:21.43px;background:#f9f9f9"></div>
<div style="position:absolute;left:0.00px;top:590.74px;width:519.00px;height:1.00px;background:#efefef"></div>
<div style="position:absolute;left:32.00px;top:581.01px;width:9.00px;height:1.00px;border-top:1px dotted #a0a0a0"></div>
<div style="position:absolute;left:42.50px;top:574.61px;width:14.00px;height:14.00px;border:1.6px solid #555;background:#fff"></div>
<svg width="14" height="14" viewBox="0 0 14 14" style="position:absolute;left:42.50px;top:574.61px"><path d="M3 7.2 L6 10.8 L12 2.2" fill="none" stroke="#e8202a" stroke-width="2.4"/></svg>
<div style="position:absolute;left:59.50px;top:573.81px;width:15px;height:15px"><svg width="15" height="15" viewBox="0 0 15 15" style="position:absolute;left:0;top:0"><path d="M1 4.5 L7 1.5 L14 3.5 L14 10.5 L8 14 L1 11.5 Z" fill="#c9941c"/><path d="M1 4.5 L7 1.5 L14 3.5 L8 6.5 Z" fill="#fff2a0"/><path d="M1 4.5 L8 6.5 L8 14 L1 11.5 Z" fill="#f5d44a"/><path d="M8 6.5 L14 3.5 L14 10.5 L8 14 Z" fill="#d49a20"/><rect x="2.5" y="6.5" width="4" height="4" fill="#fff6b8" opacity="0.7"/></svg></div>
<div style="position:absolute;left:78.90px;top:575.38px;font-size:12.2px;line-height:12.2px;color:#1e1e1e;white-space:pre;letter-spacing:0px;">500_5R5V_IC/A;1</div>
<div style="position:absolute;left:454.90px;top:570.31px;width:63px;height:21.43px;overflow:hidden">
<div style="position:absolute;left:0.00px;top:5.07px;font-size:12.2px;line-height:12.2px;color:#1e1e1e;white-space:pre;letter-spacing:0px;">500_5R5V_IC</div>
</div>
<div style="position:absolute;left:0.00px;top:612.17px;width:519.00px;height:1.00px;background:#efefef"></div>
<div style="position:absolute;left:32.00px;top:602.44px;width:9.00px;height:1.00px;border-top:1px dotted #a0a0a0"></div>
<div style="position:absolute;left:42.50px;top:596.04px;width:14.00px;height:14.00px;border:1.6px solid #555;background:#fff"></div>
<svg width="14" height="14" viewBox="0 0 14 14" style="position:absolute;left:42.50px;top:596.04px"><path d="M3 7.2 L6 10.8 L12 2.2" fill="none" stroke="#e8202a" stroke-width="2.4"/></svg>
<div style="position:absolute;left:59.50px;top:595.24px;width:15px;height:15px"><svg width="15" height="15" viewBox="0 0 15 15" style="position:absolute;left:0;top:0"><path d="M1 4.5 L7 1.5 L14 3.5 L14 10.5 L8 14 L1 11.5 Z" fill="#c9941c"/><path d="M1 4.5 L7 1.5 L14 3.5 L8 6.5 Z" fill="#fff2a0"/><path d="M1 4.5 L8 6.5 L8 14 L1 11.5 Z" fill="#f5d44a"/><path d="M8 6.5 L14 3.5 L14 10.5 L8 14 Z" fill="#d49a20"/><rect x="2.5" y="6.5" width="4" height="4" fill="#fff6b8" opacity="0.7"/></svg></div>
<div style="position:absolute;left:78.90px;top:596.81px;font-size:12.2px;line-height:12.2px;color:#1e1e1e;white-space:pre;letter-spacing:0px;">506_5V_IC/A;1</div>
<div style="position:absolute;left:454.90px;top:591.74px;width:63px;height:21.43px;overflow:hidden">
<div style="position:absolute;left:0.00px;top:5.07px;font-size:12.2px;line-height:12.2px;color:#1e1e1e;white-space:pre;letter-spacing:0px;">506_5V_IC</div>
</div>
<div style="position:absolute;left:76.00px;top:613.77px;width:442.00px;height:20.83px;background:#d2e4eb"></div>
<div style="position:absolute;left:0.00px;top:633.60px;width:519.00px;height:1.00px;background:#efefef"></div>
<div style="position:absolute;left:32.00px;top:623.87px;width:9.00px;height:1.00px;border-top:1px dotted #a0a0a0"></div>
<div style="position:absolute;left:42.50px;top:617.47px;width:14.00px;height:14.00px;border:1.6px solid #555;background:#fff"></div>
<svg width="14" height="14" viewBox="0 0 14 14" style="position:absolute;left:42.50px;top:617.47px"><path d="M3 7.2 L6 10.8 L12 2.2" fill="none" stroke="#e8202a" stroke-width="2.4"/></svg>
<div style="position:absolute;left:59.50px;top:616.67px;width:15px;height:15px"><svg width="15" height="15" viewBox="0 0 15 15" style="position:absolute;left:0;top:0"><path d="M1 4.5 L7 1.5 L14 3.5 L14 10.5 L8 14 L1 11.5 Z" fill="#c9941c"/><path d="M1 4.5 L7 1.5 L14 3.5 L8 6.5 Z" fill="#fff2a0"/><path d="M1 4.5 L8 6.5 L8 14 L1 11.5 Z" fill="#f5d44a"/><path d="M8 6.5 L14 3.5 L14 10.5 L8 14 Z" fill="#d49a20"/><rect x="2.5" y="6.5" width="4" height="4" fill="#fff6b8" opacity="0.7"/></svg></div>
<div style="position:absolute;left:78.90px;top:618.24px;font-size:12.2px;line-height:12.2px;color:#1e1e1e;white-space:pre;letter-spacing:0px;">030279/A;1-TCTest.pcbPWB</div>
<div style="position:absolute;left:454.90px;top:613.17px;width:63px;height:21.43px;overflow:hidden">
<div style="position:absolute;left:0.00px;top:5.07px;font-size:12.2px;line-height:12.2px;color:#1e1e1e;white-space:pre;letter-spacing:0px;">030279</div>
</div>
<div style="position:absolute;left:0.00px;top:655.03px;width:519.00px;height:1.00px;background:#efefef"></div>
<div style="position:absolute;left:32.00px;top:645.30px;width:9.00px;height:1.00px;border-top:1px dotted #a0a0a0"></div>
<div style="position:absolute;left:42.50px;top:638.90px;width:14.00px;height:14.00px;border:1.6px solid #666;background:#fff"></div>
<svg width="14" height="14" viewBox="0 0 14 14" style="position:absolute;left:42.50px;top:638.90px"><path d="M3 7.2 L6 10.8 L12 2.2" fill="none" stroke="#8c8c8c" stroke-width="2.4"/></svg>
<div style="position:absolute;left:59.50px;top:638.10px;width:15px;height:15px"><svg width="15" height="15" viewBox="0 0 15 15" style="position:absolute;left:0;top:0"><path d="M1 4.5 L7 1.5 L14 3.5 L14 10.5 L8 14 L1 11.5 Z" fill="#c9941c"/><path d="M1 4.5 L7 1.5 L14 3.5 L8 6.5 Z" fill="#fff2a0"/><path d="M1 4.5 L8 6.5 L8 14 L1 11.5 Z" fill="#f5d44a"/><path d="M8 6.5 L14 3.5 L14 10.5 L8 14 Z" fill="#d49a20"/><rect x="2.5" y="6.5" width="4" height="4" fill="#fff6b8" opacity="0.7"/></svg></div>
<div style="position:absolute;left:78.90px;top:639.67px;font-size:12.2px;line-height:12.2px;color:#a6a6a6;white-space:pre;letter-spacing:0px;">551_QN2222/A;1</div>
<div style="position:absolute;left:454.90px;top:634.60px;width:63px;height:21.43px;overflow:hidden">
<div style="position:absolute;left:0.00px;top:5.07px;font-size:12.2px;line-height:12.2px;color:#a6a6a6;white-space:pre;letter-spacing:0px;">551_QN2222</div>
</div>
<div style="position:absolute;left:31.00px;top:0.00px;width:1.00px;height:645.00px;border-left:1px dotted #a0a0a0"></div>
<div style="position:absolute;left:449.00px;top:0.00px;width:2.00px;height:655.50px;background:#111"></div>
<div style="position:absolute;left:519.00px;top:0.00px;width:16.00px;height:656.00px;background:#f0f0f0"></div>
<div style="position:absolute;left:520.00px;top:50.00px;width:15.00px;height:587.00px;background:#cdcdcd"></div>
<svg width="12" height="8" style="position:absolute;left:521px;top:643px"><path d="M2 1.5 L6 5.5 L10 1.5" fill="none" stroke="#444" stroke-width="2"/></svg>
<div style="position:absolute;left:0.00px;top:656.00px;width:519.00px;height:18.00px;background:#f0f0f0"></div>
<div style="position:absolute;left:19.00px;top:657.50px;width:121.50px;height:15.00px;background:#cdcdcd"></div>
<svg width="8" height="12" style="position:absolute;left:5px;top:659px"><path d="M6 1.5 L2 5.5 L6 9.5" fill="none" stroke="#444" stroke-width="2"/></svg>
<svg width="8" height="12" style="position:absolute;left:505px;top:659px"><path d="M2 1.5 L6 5.5 L2 9.5" fill="none" stroke="#444" stroke-width="2"/></svg>
<div style="position:absolute;left:519.00px;top:656.00px;width:19.00px;height:18.00px;background:#f0f0f0"></div>
<div style="position:absolute;left:0.00px;top:675.50px;width:538.00px;height:3.00px;background:#c8c8c8"></div>
<div style="position:absolute;left:537.00px;top:0.00px;width:1.00px;height:676.00px;background:#e3e3e3"></div>
</div>
<div style="position:absolute;left:740px;top:393px;width:2px;height:676px;background:#c6c6c6"></div>
<div style="position:absolute;left:778.5px;top:393px;width:1.5px;height:676px;background:#e0e0e0"></div>
<div style="position:absolute;left:915.5px;top:246px;width:391.5px;height:2.6px;background:#255b89"></div>
<div style="position:absolute;left:925.8px;top:224.7px;width:195.2px;height:23px;background:#255b89"></div>
<svg width="18" height="14" style="position:absolute;left:931px;top:228.5px"><path d="M1.5 7.5 L8 3 L16.5 5 L16.5 8 L10 12 L1.5 10 Z" fill="#c9ced6" stroke="#eef2f6" stroke-width="1"/><path d="M1.5 7.5 L8 3 L16.5 5 L10 9.5 Z" fill="#e6e9ee"/><circle cx="9" cy="6.5" r="1.6" fill="#8f9aa8"/></svg>
<div style="position:absolute;left:953.3px;top:230.59px;font-size:12.3px;line-height:12.3px;color:#fff;white-space:pre;letter-spacing:0px;">030278/A;1-TCTest.pcb</div>
<svg width="12" height="13" style="position:absolute;left:1087.5px;top:228.5px"><path d="M6.5 1.5 L1.5 1.5 L1.5 11.5 L9.5 11.5 L9.5 7" fill="none" stroke="#fff" stroke-width="1.8"/><path d="M5 7.5 L10.5 2" stroke="#fff" stroke-width="2"/></svg>
<svg width="12" height="12" style="position:absolute;left:1104px;top:229.5px"><path d="M1.5 1.5 L10.5 10.5 M10.5 1.5 L1.5 10.5" stroke="#fff" stroke-width="2.2"/></svg>
<svg width="1920" height="1080" style="position:absolute;left:0;top:0" viewBox="0 0 1920 1080"><defs><clipPath id="vc"><rect x="780" y="250" width="1033" height="830"/></clipPath></defs><g clip-path="url(#vc)"><polygon points="1405.4,519.0 1505.4,481.4 1505.4,490.4 1405.4,528.0" fill="#f2b773" stroke="#f3a24e" stroke-width="1.4" stroke-linejoin="round" /><polygon points="1587.0,921.0 1813.0,853.0 1813.0,862.0 1587.0,930.0" fill="#f2b773" stroke="#f3a24e" stroke-width="1.4" stroke-linejoin="round" /><polygon points="1408.0,840.5 1587.0,921.0 1587.0,930.0 1408.0,849.5" fill="#f2b773" stroke="#f3a24e" stroke-width="1.4" stroke-linejoin="round" /><polygon points="1015.0,690.0 1367.6,850.2 1367.6,859.2 1015.0,699.0" fill="#f2b773" stroke="#f3a24e" stroke-width="1.4" stroke-linejoin="round" /><polygon points="1367.6,850.2 1408.0,840.5 1408.0,849.5 1367.6,859.2" fill="#f2b773" stroke="#f3a24e" stroke-width="1.4" stroke-linejoin="round" /><polygon points="941.5,626.7 1053.8,679.5 1053.8,688.5 941.5,635.7" fill="#f2b773" stroke="#f3a24e" stroke-width="1.4" stroke-linejoin="round" /><polygon points="894.0,637.0 941.5,626.7 941.5,635.7 894.0,646.0" fill="#f2b773" stroke="#f3a24e" stroke-width="1.4" stroke-linejoin="round" /><polygon points="837.8,608.9 894.0,637.0 894.0,646.0 837.8,617.9" fill="#f2b773" stroke="#f3a24e" stroke-width="1.4" stroke-linejoin="round" /><polygon points="837.8,608.9 1404.5,433.5 1505.4,481.4 1405.4,519.0 1813.0,710.0 1813.0,853.0 1587.0,921.0 1408.0,840.5 1367.6,850.2 1015.0,690.0 1053.8,679.5 941.5,626.7 894.0,637.0" fill="#f6c17f" stroke="#f3a24e" stroke-width="3" stroke-linejoin="round" /><polyline points="840.0,609.0 1404.0,438.0 1497.0,482.0" fill="none" stroke="#f7b668" stroke-width="3"/><polyline points="1410.0,521.0 1813.0,713.0" fill="none" stroke="#f2a656" stroke-width="5"/><ellipse cx="1403.5" cy="466" rx="12" ry="6.5" fill="#f2b877" stroke="#efa860" stroke-width="1.2"/><path d="M1391.5 457 L1391.5 466 M1415.5 457 L1415.5 466" stroke="#efa860" stroke-width="1.2"/><ellipse cx="1403.5" cy="457" rx="12" ry="6.5" fill="#f5c283" stroke="#efa860" stroke-width="1.2"/><ellipse cx="890" cy="624" rx="11" ry="6" fill="#f2b877" stroke="#f0a35a" stroke-width="1.2"/><ellipse cx="890" cy="620" rx="11" ry="6" fill="#f3bb7a" stroke="#f0a35a" stroke-width="1.3"/><ellipse cx="1587" cy="915" rx="11" ry="6" fill="#f2b877" stroke="#f0a35a" stroke-width="1.2"/><ellipse cx="1587" cy="911" rx="11" ry="6" fill="#f3bb7a" stroke="#f0a35a" stroke-width="1.3"/><polygon points="1024.0,688.6 1055.0,680.6 1401.0,841.0 1371.0,850.0" fill="#fdf53c" stroke="#6b6b2a" stroke-width="0.9" stroke-linejoin="round" /><line x1="1088.3" y1="716.0" x2="1113.9" y2="708.9" stroke="#f3a24e" stroke-width="1.6" /><line x1="1095.6" y1="721.0" x2="1123.3" y2="712.8" stroke="#f3a24e" stroke-width="1.6" /><polygon points="1554.0,821.0 1561.2,824.4 1561.2,830.4 1554.0,827.0" fill="#e9b57c" stroke="#dca468" stroke-width="0.7" stroke-linejoin="round" /><polygon points="1561.2,824.4 1574.6,820.3 1574.6,826.3 1561.2,830.4" fill="#eebf88" stroke="#dca468" stroke-width="0.7" stroke-linejoin="round" /><polygon points="1554.0,821.0 1567.4,816.9 1574.6,820.3 1561.2,824.4" fill="#f4c995" stroke="#dca468" stroke-width="0.7" stroke-linejoin="round" /><polygon points="1637.0,795.0 1644.2,798.4 1644.2,804.4 1637.0,801.0" fill="#e9b57c" stroke="#dca468" stroke-width="0.7" stroke-linejoin="round" /><polygon points="1644.2,798.4 1657.6,794.3 1657.6,800.3 1644.2,804.4" fill="#eebf88" stroke="#dca468" stroke-width="0.7" stroke-linejoin="round" /><polygon points="1637.0,795.0 1650.4,790.9 1657.6,794.3 1644.2,798.4" fill="#f4c995" stroke="#dca468" stroke-width="0.7" stroke-linejoin="round" /><polygon points="1336.0,793.0 1343.2,796.4 1343.2,802.4 1336.0,799.0" fill="#e9b57c" stroke="#dca468" stroke-width="0.7" stroke-linejoin="round" /><polygon points="1343.2,796.4 1356.6,792.3 1356.6,798.3 1343.2,802.4" fill="#eebf88" stroke="#dca468" stroke-width="0.7" stroke-linejoin="round" /><polygon points="1336.0,793.0 1349.4,788.9 1356.6,792.3 1343.2,796.4" fill="#f4c995" stroke="#dca468" stroke-width="0.7" stroke-linejoin="round" /><polygon points="1716.0,770.0 1723.2,773.4 1723.2,779.4 1716.0,776.0" fill="#e9b57c" stroke="#dca468" stroke-width="0.7" stroke-linejoin="round" /><polygon points="1723.2,773.4 1736.6,769.3 1736.6,775.3 1723.2,779.4" fill="#eebf88" stroke="#dca468" stroke-width="0.7" stroke-linejoin="round" /><polygon points="1716.0,770.0 1729.4,765.9 1736.6,769.3 1723.2,773.4" fill="#f4c995" stroke="#dca468" stroke-width="0.7" stroke-linejoin="round" /><polygon points="1286.0,775.0 1293.2,778.4 1293.2,784.4 1286.0,781.0" fill="#e9b57c" stroke="#dca468" stroke-width="0.7" stroke-linejoin="round" /><polygon points="1293.2,778.4 1306.6,774.3 1306.6,780.3 1293.2,784.4" fill="#eebf88" stroke="#dca468" stroke-width="0.7" stroke-linejoin="round" /><polygon points="1286.0,775.0 1299.4,770.9 1306.6,774.3 1293.2,778.4" fill="#f4c995" stroke="#dca468" stroke-width="0.7" stroke-linejoin="round" /><polygon points="1357.0,758.0 1364.2,761.4 1364.2,767.4 1357.0,764.0" fill="#e9b57c" stroke="#dca468" stroke-width="0.7" stroke-linejoin="round" /><polygon points="1364.2,761.4 1377.6,757.3 1377.6,763.3 1364.2,767.4" fill="#eebf88" stroke="#dca468" stroke-width="0.7" stroke-linejoin="round" /><polygon points="1357.0,758.0 1370.4,753.9 1377.6,757.3 1364.2,761.4" fill="#f4c995" stroke="#dca468" stroke-width="0.7" stroke-linejoin="round" /><polygon points="1315.0,742.0 1322.2,745.4 1322.2,751.4 1315.0,748.0" fill="#e9b57c" stroke="#dca468" stroke-width="0.7" stroke-linejoin="round" /><polygon points="1322.2,745.4 1335.6,741.3 1335.6,747.3 1322.2,751.4" fill="#eebf88" stroke="#dca468" stroke-width="0.7" stroke-linejoin="round" /><polygon points="1315.0,742.0 1328.4,737.9 1335.6,741.3 1322.2,745.4" fill="#f4c995" stroke="#dca468" stroke-width="0.7" stroke-linejoin="round" /><polygon points="1236.0,702.0 1243.2,705.4 1243.2,711.4 1236.0,708.0" fill="#e9b57c" stroke="#dca468" stroke-width="0.7" stroke-linejoin="round" /><polygon points="1243.2,705.4 1256.6,701.3 1256.6,707.3 1243.2,711.4" fill="#eebf88" stroke="#dca468" stroke-width="0.7" stroke-linejoin="round" /><polygon points="1236.0,702.0 1249.4,697.9 1256.6,701.3 1243.2,705.4" fill="#f4c995" stroke="#dca468" stroke-width="0.7" stroke-linejoin="round" /><polygon points="1146.0,663.0 1153.2,666.4 1153.2,672.4 1146.0,669.0" fill="#e9b57c" stroke="#dca468" stroke-width="0.7" stroke-linejoin="round" /><polygon points="1153.2,666.4 1166.6,662.3 1166.6,668.3 1153.2,672.4" fill="#eebf88" stroke="#dca468" stroke-width="0.7" stroke-linejoin="round" /><polygon points="1146.0,663.0 1159.4,658.9 1166.6,662.3 1153.2,666.4" fill="#f4c995" stroke="#dca468" stroke-width="0.7" stroke-linejoin="round" /><polygon points="1162.0,617.0 1169.2,620.4 1169.2,626.4 1162.0,623.0" fill="#e9b57c" stroke="#dca468" stroke-width="0.7" stroke-linejoin="round" /><polygon points="1169.2,620.4 1182.6,616.3 1182.6,622.3 1169.2,626.4" fill="#eebf88" stroke="#dca468" stroke-width="0.7" stroke-linejoin="round" /><polygon points="1162.0,617.0 1175.4,612.9 1182.6,616.3 1169.2,620.4" fill="#f4c995" stroke="#dca468" stroke-width="0.7" stroke-linejoin="round" /><polygon points="1057.0,620.0 1064.2,623.4 1064.2,629.4 1057.0,626.0" fill="#e9b57c" stroke="#dca468" stroke-width="0.7" stroke-linejoin="round" /><polygon points="1064.2,623.4 1077.6,619.3 1077.6,625.3 1064.2,629.4" fill="#eebf88" stroke="#dca468" stroke-width="0.7" stroke-linejoin="round" /><polygon points="1057.0,620.0 1070.4,615.9 1077.6,619.3 1064.2,623.4" fill="#f4c995" stroke="#dca468" stroke-width="0.7" stroke-linejoin="round" /><polygon points="1138.0,661.0 1145.2,664.4 1145.2,670.4 1138.0,667.0" fill="#e9b57c" stroke="#dca468" stroke-width="0.7" stroke-linejoin="round" /><polygon points="1145.2,664.4 1158.6,660.3 1158.6,666.3 1145.2,670.4" fill="#eebf88" stroke="#dca468" stroke-width="0.7" stroke-linejoin="round" /><polygon points="1138.0,661.0 1151.4,656.9 1158.6,660.3 1145.2,664.4" fill="#f4c995" stroke="#dca468" stroke-width="0.7" stroke-linejoin="round" /><polygon points="1162.0,570.0 1169.2,573.4 1169.2,579.4 1162.0,576.0" fill="#e9b57c" stroke="#dca468" stroke-width="0.7" stroke-linejoin="round" /><polygon points="1169.2,573.4 1182.6,569.3 1182.6,575.3 1169.2,579.4" fill="#eebf88" stroke="#dca468" stroke-width="0.7" stroke-linejoin="round" /><polygon points="1162.0,570.0 1175.4,565.9 1182.6,569.3 1169.2,573.4" fill="#f4c995" stroke="#dca468" stroke-width="0.7" stroke-linejoin="round" /><polygon points="1120.0,554.0 1127.2,557.4 1127.2,563.4 1120.0,560.0" fill="#e9b57c" stroke="#dca468" stroke-width="0.7" stroke-linejoin="round" /><polygon points="1127.2,557.4 1140.6,553.3 1140.6,559.3 1127.2,563.4" fill="#eebf88" stroke="#dca468" stroke-width="0.7" stroke-linejoin="round" /><polygon points="1120.0,554.0 1133.4,549.9 1140.6,553.3 1127.2,557.4" fill="#f4c995" stroke="#dca468" stroke-width="0.7" stroke-linejoin="round" /><polygon points="1507.0,609.0 1514.2,612.4 1514.2,618.4 1507.0,615.0" fill="#e9b57c" stroke="#dca468" stroke-width="0.7" stroke-linejoin="round" /><polygon points="1514.2,612.4 1527.6,608.3 1527.6,614.3 1514.2,618.4" fill="#eebf88" stroke="#dca468" stroke-width="0.7" stroke-linejoin="round" /><polygon points="1507.0,609.0 1520.4,604.9 1527.6,608.3 1514.2,612.4" fill="#f4c995" stroke="#dca468" stroke-width="0.7" stroke-linejoin="round" /><polygon points="970.0,587.0 977.2,590.4 977.2,596.4 970.0,593.0" fill="#e9b57c" stroke="#dca468" stroke-width="0.7" stroke-linejoin="round" /><polygon points="977.2,590.4 990.6,586.3 990.6,592.3 977.2,596.4" fill="#eebf88" stroke="#dca468" stroke-width="0.7" stroke-linejoin="round" /><polygon points="970.0,587.0 983.4,582.9 990.6,586.3 977.2,590.4" fill="#f4c995" stroke="#dca468" stroke-width="0.7" stroke-linejoin="round" /><polygon points="1207.0,524.0 1214.2,527.4 1214.2,533.4 1207.0,530.0" fill="#e9b57c" stroke="#dca468" stroke-width="0.7" stroke-linejoin="round" /><polygon points="1214.2,527.4 1227.6,523.3 1227.6,529.3 1214.2,533.4" fill="#eebf88" stroke="#dca468" stroke-width="0.7" stroke-linejoin="round" /><polygon points="1207.0,524.0 1220.4,519.9 1227.6,523.3 1214.2,527.4" fill="#f4c995" stroke="#dca468" stroke-width="0.7" stroke-linejoin="round" /><polygon points="1106.9,527.4 1176.6,560.2 1176.6,569.2 1106.9,536.4" fill="#3a3a3a" stroke="none" stroke-width="0.8" stroke-linejoin="round" /><polygon points="1178.5,560.3 1212.9,549.8 1212.9,556.1 1178.5,566.6" fill="#4a4a4a" stroke="none" stroke-width="0.8" stroke-linejoin="round" /><line x1="1107.8" y1="533.1" x2="1173.8" y2="564.1" stroke="#c4c4c4" stroke-width="4.5" stroke-dasharray="2.13 3.95" opacity="0.75"/><polygon points="1106.0,520.0 1177.5,553.6 1177.5,560.6 1106.0,527.0" fill="#6c6c6c" stroke="#333" stroke-width="0.7" stroke-linejoin="round" /><polygon points="1177.5,553.6 1213.9,542.5 1213.9,549.5 1177.5,560.6" fill="#7a7a7a" stroke="#333" stroke-width="0.7" stroke-linejoin="round" /><polygon points="1106.0,520.0 1142.4,508.9 1213.9,542.5 1177.5,553.6" fill="#858585" stroke="#333" stroke-width="0.7" stroke-linejoin="round" /><polygon points="1195.4,499.7 1265.1,532.5 1265.1,541.5 1195.4,508.7" fill="#3a3a3a" stroke="none" stroke-width="0.8" stroke-linejoin="round" /><polygon points="1267.0,532.6 1301.4,522.1 1301.4,528.4 1267.0,538.9" fill="#4a4a4a" stroke="none" stroke-width="0.8" stroke-linejoin="round" /><line x1="1196.3" y1="505.4" x2="1262.3" y2="536.4" stroke="#c4c4c4" stroke-width="4.5" stroke-dasharray="2.13 3.95" opacity="0.75"/><polygon points="1194.5,492.3 1266.0,525.9 1266.0,532.9 1194.5,499.3" fill="#6c6c6c" stroke="#333" stroke-width="0.7" stroke-linejoin="round" /><polygon points="1266.0,525.9 1302.4,514.8 1302.4,521.8 1266.0,532.9" fill="#7a7a7a" stroke="#333" stroke-width="0.7" stroke-linejoin="round" /><polygon points="1194.5,492.3 1230.9,481.2 1302.4,514.8 1266.0,525.9" fill="#858585" stroke="#333" stroke-width="0.7" stroke-linejoin="round" /><polygon points="1287.5,472.0 1357.2,504.8 1357.2,513.8 1287.5,481.0" fill="#3a3a3a" stroke="none" stroke-width="0.8" stroke-linejoin="round" /><polygon points="1359.1,504.9 1393.5,494.4 1393.5,500.7 1359.1,511.2" fill="#4a4a4a" stroke="none" stroke-width="0.8" stroke-linejoin="round" /><line x1="1288.4" y1="477.7" x2="1354.4" y2="508.7" stroke="#c4c4c4" stroke-width="4.5" stroke-dasharray="2.13 3.95" opacity="0.75"/><polygon points="1286.6,464.6 1358.1,498.2 1358.1,505.2 1286.6,471.6" fill="#6c6c6c" stroke="#333" stroke-width="0.7" stroke-linejoin="round" /><polygon points="1358.1,498.2 1394.5,487.1 1394.5,494.1 1358.1,505.2" fill="#7a7a7a" stroke="#333" stroke-width="0.7" stroke-linejoin="round" /><polygon points="1286.6,464.6 1323.0,453.5 1394.5,487.1 1358.1,498.2" fill="#858585" stroke="#333" stroke-width="0.7" stroke-linejoin="round" /><polygon points="1217.0,565.0 1320.0,612.0 1316.0,629.0 1210.0,583.0" fill="#383838" stroke="none" stroke-width="0.8" stroke-linejoin="round" /><line x1="1214" y1="574" x2="1318" y2="621" stroke="#bdbdbd" stroke-width="12" stroke-dasharray="1.2 2.4" opacity="0.55"/><polygon points="1347.0,615.0 1467.0,570.0 1469.0,578.0 1353.0,631.0 1349.0,629.0" fill="#383838" stroke="none" stroke-width="0.8" stroke-linejoin="round" /><line x1="1350" y1="622" x2="1467" y2="575" stroke="#bdbdbd" stroke-width="9" stroke-dasharray="1.2 2.4" opacity="0.55"/><polygon points="1222.0,553.0 1320.0,598.0 1320.0,612.0 1222.0,566.0" fill="#737373" stroke="#333" stroke-width="0.7" stroke-linejoin="round" /><polygon points="1320.0,598.0 1348.0,601.0 1348.0,625.0 1320.0,624.0" fill="#7d7d7d" stroke="#333" stroke-width="0.7" stroke-linejoin="round" /><line x1="1320.0" y1="612.0" x2="1348.0" y2="614.0" stroke="#333" stroke-width="0.8" /><polygon points="1348.0,601.0 1467.0,556.0 1467.0,570.0 1348.0,615.0" fill="#6e6e6e" stroke="#333" stroke-width="0.7" stroke-linejoin="round" /><polygon points="1222.0,553.0 1226.0,545.0 1347.0,508.0 1361.0,508.0 1467.0,550.0 1467.0,556.0 1348.0,601.0 1320.0,598.0" fill="#838383" stroke="#333" stroke-width="0.7" stroke-linejoin="round" /><ellipse cx="1357" cy="515" rx="7.5" ry="4.5" fill="#3e3a36"/><polygon points="1447.6,606.0 1515.0,591.0 1530.5,597.0 1530.5,603.0 1462.0,618.0 1447.6,611.0" fill="#454545" stroke="#2a2a2a" stroke-width="0.8" stroke-linejoin="round" /><path d="M1458 584 Q1454 590 1456 598 L1458 605 L1480 610 L1513 600 L1513 580 Q1512 571 1502 572 L1468 579 Q1460 580 1458 584 Z" fill="#f2f2f2" stroke="#555" stroke-width="0.8"/><path d="M1459 584 Q1462 578 1470 578 L1500 572 Q1510 571 1511 578 L1480 587 Q1462 591 1459 584 Z" fill="#ffffff" stroke="#777" stroke-width="0.6"/><path d="M1480 588 L1480 610" stroke="#888" stroke-width="0.7"/><polygon points="1309.6,667.4 1456.2,736.2 1456.2,739.2 1309.6,670.4" fill="#2d3a2e" stroke="#222" stroke-width="0.7" stroke-linejoin="round" /><polygon points="1456.2,736.2 1640.9,680.1 1640.9,683.1 1456.2,739.2" fill="#3b4a3c" stroke="#222" stroke-width="0.7" stroke-linejoin="round" /><polygon points="1309.6,667.4 1494.3,611.2 1640.9,680.1 1456.2,736.2" fill="#ffffff" stroke="#222" stroke-width="0.7" stroke-linejoin="round" /><ellipse cx="1326" cy="669" rx="3" ry="2" fill="#333"/><polygon points="1556.7,579.2 1611.9,605.1 1611.9,623.1 1556.7,597.2" fill="#505050" stroke="#333" stroke-width="0.7" stroke-linejoin="round" /><polygon points="1611.9,605.1 1659.8,590.6 1659.8,608.6 1611.9,623.1" fill="#5e5e5e" stroke="#333" stroke-width="0.7" stroke-linejoin="round" /><polygon points="1556.7,579.2 1604.5,564.7 1659.8,590.6 1611.9,605.1" fill="#7a7a7a" stroke="#333" stroke-width="0.7" stroke-linejoin="round" /><path d="M1564.0 588.0 Q1556.0 586.0 1556.0 596.0 L1556.0 612.0" fill="none" stroke="#8a8a8a" stroke-width="4.2"/><path d="M1564.0 588.0 Q1556.0 586.0 1556.0 596.0 L1556.0 612.0" fill="none" stroke="#d8d8d8" stroke-width="2"/><path d="M1575.5 593.4 Q1567.5 591.4 1567.5 601.4 L1567.5 617.4" fill="none" stroke="#8a8a8a" stroke-width="4.2"/><path d="M1575.5 593.4 Q1567.5 591.4 1567.5 601.4 L1567.5 617.4" fill="none" stroke="#d8d8d8" stroke-width="2"/><path d="M1587.0 598.8 Q1579.0 596.8 1579.0 606.8 L1579.0 622.8" fill="none" stroke="#8a8a8a" stroke-width="4.2"/><path d="M1587.0 598.8 Q1579.0 596.8 1579.0 606.8 L1579.0 622.8" fill="none" stroke="#d8d8d8" stroke-width="2"/><path d="M1598.5 604.2 Q1590.5 602.2 1590.5 612.2 L1590.5 628.2" fill="none" stroke="#8a8a8a" stroke-width="4.2"/><path d="M1598.5 604.2 Q1590.5 602.2 1590.5 612.2 L1590.5 628.2" fill="none" stroke="#d8d8d8" stroke-width="2"/><path d="M1610.0 609.6 Q1602.0 607.6 1602.0 617.6 L1602.0 633.6" fill="none" stroke="#8a8a8a" stroke-width="4.2"/><path d="M1610.0 609.6 Q1602.0 607.6 1602.0 617.6 L1602.0 633.6" fill="none" stroke="#d8d8d8" stroke-width="2"/><polygon points="1594.9,642.1 1614.8,651.5 1614.8,656.5 1594.9,647.1" fill="#3a3a3a" stroke="none" stroke-width="0.8" stroke-linejoin="round" /><polygon points="1616.7,651.6 1634.9,646.1 1634.9,649.6 1616.7,655.1" fill="#4a4a4a" stroke="none" stroke-width="0.8" stroke-linejoin="round" /><line x1="1595.8" y1="645.8" x2="1612.0" y2="653.4" stroke="#c4c4c4" stroke-width="2.5" stroke-dasharray="1.57 2.92" opacity="0.75"/><polygon points="1594.0,636.7 1615.7,646.9 1615.7,651.9 1594.0,641.7" fill="#6c6c6c" stroke="#333" stroke-width="0.7" stroke-linejoin="round" /><polygon points="1615.7,646.9 1635.8,640.8 1635.8,645.8 1615.7,651.9" fill="#7a7a7a" stroke="#333" stroke-width="0.7" stroke-linejoin="round" /><polygon points="1594.0,636.7 1614.1,630.6 1635.8,640.8 1615.7,646.9" fill="#858585" stroke="#333" stroke-width="0.7" stroke-linejoin="round" /><polygon points="1627.6,658.7 1647.5,668.1 1647.5,673.1 1627.6,663.7" fill="#3a3a3a" stroke="none" stroke-width="0.8" stroke-linejoin="round" /><polygon points="1649.4,668.2 1667.6,662.7 1667.6,666.2 1649.4,671.7" fill="#4a4a4a" stroke="none" stroke-width="0.8" stroke-linejoin="round" /><line x1="1628.5" y1="662.4" x2="1644.7" y2="670.0" stroke="#c4c4c4" stroke-width="2.5" stroke-dasharray="1.57 2.92" opacity="0.75"/><polygon points="1626.7,653.3 1648.4,663.5 1648.4,668.5 1626.7,658.3" fill="#6c6c6c" stroke="#333" stroke-width="0.7" stroke-linejoin="round" /><polygon points="1648.4,663.5 1668.5,657.4 1668.5,662.4 1648.4,668.5" fill="#7a7a7a" stroke="#333" stroke-width="0.7" stroke-linejoin="round" /><polygon points="1626.7,653.3 1646.8,647.2 1668.5,657.4 1648.4,663.5" fill="#858585" stroke="#333" stroke-width="0.7" stroke-linejoin="round" /><polygon points="1662.4,675.0 1682.3,684.4 1682.3,689.4 1662.4,680.0" fill="#3a3a3a" stroke="none" stroke-width="0.8" stroke-linejoin="round" /><polygon points="1684.2,684.5 1702.4,679.0 1702.4,682.5 1684.2,688.0" fill="#4a4a4a" stroke="none" stroke-width="0.8" stroke-linejoin="round" /><line x1="1663.3" y1="678.7" x2="1679.5" y2="686.3" stroke="#c4c4c4" stroke-width="2.5" stroke-dasharray="1.57 2.92" opacity="0.75"/><polygon points="1661.5,669.6 1683.2,679.8 1683.2,684.8 1661.5,674.6" fill="#6c6c6c" stroke="#333" stroke-width="0.7" stroke-linejoin="round" /><polygon points="1683.2,679.8 1703.3,673.7 1703.3,678.7 1683.2,684.8" fill="#7a7a7a" stroke="#333" stroke-width="0.7" stroke-linejoin="round" /><polygon points="1661.5,669.6 1681.6,663.5 1703.3,673.7 1683.2,679.8" fill="#858585" stroke="#333" stroke-width="0.7" stroke-linejoin="round" /><polygon points="1694.9,691.4 1714.8,700.8 1714.8,705.8 1694.9,696.4" fill="#3a3a3a" stroke="none" stroke-width="0.8" stroke-linejoin="round" /><polygon points="1716.7,700.9 1734.9,695.4 1734.9,698.9 1716.7,704.4" fill="#4a4a4a" stroke="none" stroke-width="0.8" stroke-linejoin="round" /><line x1="1695.8" y1="695.1" x2="1712.0" y2="702.7" stroke="#c4c4c4" stroke-width="2.5" stroke-dasharray="1.57 2.92" opacity="0.75"/><polygon points="1694.0,686.0 1715.7,696.2 1715.7,701.2 1694.0,691.0" fill="#6c6c6c" stroke="#333" stroke-width="0.7" stroke-linejoin="round" /><polygon points="1715.7,696.2 1735.8,690.1 1735.8,695.1 1715.7,701.2" fill="#7a7a7a" stroke="#333" stroke-width="0.7" stroke-linejoin="round" /><polygon points="1694.0,686.0 1714.1,679.9 1735.8,690.1 1715.7,696.2" fill="#858585" stroke="#333" stroke-width="0.7" stroke-linejoin="round" /><polygon points="1375.9,789.1 1464.6,830.8 1464.6,840.8 1375.9,799.1" fill="#3a3a3a" stroke="none" stroke-width="0.8" stroke-linejoin="round" /><polygon points="1466.5,830.9 1517.2,815.5 1517.2,822.5 1466.5,837.9" fill="#4a4a4a" stroke="none" stroke-width="0.8" stroke-linejoin="round" /><line x1="1376.8" y1="795.3" x2="1461.8" y2="835.2" stroke="#c4c4c4" stroke-width="5.0" stroke-dasharray="1.83 3.39" opacity="0.75"/><polygon points="1375.0,781.7 1465.5,824.2 1465.5,831.2 1375.0,788.7" fill="#6c6c6c" stroke="#333" stroke-width="0.7" stroke-linejoin="round" /><polygon points="1465.5,824.2 1518.1,808.2 1518.1,815.2 1465.5,831.2" fill="#7a7a7a" stroke="#333" stroke-width="0.7" stroke-linejoin="round" /><polygon points="1375.0,781.7 1427.6,765.7 1518.1,808.2 1465.5,824.2" fill="#858585" stroke="#333" stroke-width="0.7" stroke-linejoin="round" /><ellipse cx="1500.6" cy="805.1" rx="3.5" ry="2" fill="#333"/><polygon points="1458.4,763.2 1547.1,804.9 1547.1,814.9 1458.4,773.2" fill="#3a3a3a" stroke="none" stroke-width="0.8" stroke-linejoin="round" /><polygon points="1549.0,805.0 1599.7,789.6 1599.7,796.6 1549.0,812.0" fill="#4a4a4a" stroke="none" stroke-width="0.8" stroke-linejoin="round" /><line x1="1459.3" y1="769.4" x2="1544.3" y2="809.3" stroke="#c4c4c4" stroke-width="5.0" stroke-dasharray="1.83 3.39" opacity="0.75"/><polygon points="1457.5,755.8 1548.0,798.3 1548.0,805.3 1457.5,762.8" fill="#6c6c6c" stroke="#333" stroke-width="0.7" stroke-linejoin="round" /><polygon points="1548.0,798.3 1600.6,782.3 1600.6,789.3 1548.0,805.3" fill="#7a7a7a" stroke="#333" stroke-width="0.7" stroke-linejoin="round" /><polygon points="1457.5,755.8 1510.1,739.8 1600.6,782.3 1548.0,798.3" fill="#858585" stroke="#333" stroke-width="0.7" stroke-linejoin="round" /><ellipse cx="1583.1" cy="779.2" rx="3.5" ry="2" fill="#333"/><polygon points="1541.7,737.4 1630.4,779.1 1630.4,789.1 1541.7,747.4" fill="#3a3a3a" stroke="none" stroke-width="0.8" stroke-linejoin="round" /><polygon points="1632.3,779.2 1683.0,763.8 1683.0,770.8 1632.3,786.2" fill="#4a4a4a" stroke="none" stroke-width="0.8" stroke-linejoin="round" /><line x1="1542.6" y1="743.6" x2="1627.6" y2="783.5" stroke="#c4c4c4" stroke-width="5.0" stroke-dasharray="1.83 3.39" opacity="0.75"/><polygon points="1540.8,730.0 1631.3,772.5 1631.3,779.5 1540.8,737.0" fill="#6c6c6c" stroke="#333" stroke-width="0.7" stroke-linejoin="round" /><polygon points="1631.3,772.5 1683.9,756.5 1683.9,763.5 1631.3,779.5" fill="#7a7a7a" stroke="#333" stroke-width="0.7" stroke-linejoin="round" /><polygon points="1540.8,730.0 1593.4,714.0 1683.9,756.5 1631.3,772.5" fill="#858585" stroke="#333" stroke-width="0.7" stroke-linejoin="round" /><ellipse cx="1666.4" cy="753.4" rx="3.5" ry="2" fill="#333"/><polygon points="1624.6,712.6 1713.3,754.3 1713.3,764.3 1624.6,722.6" fill="#3a3a3a" stroke="none" stroke-width="0.8" stroke-linejoin="round" /><polygon points="1715.2,754.4 1765.9,739.0 1765.9,746.0 1715.2,761.4" fill="#4a4a4a" stroke="none" stroke-width="0.8" stroke-linejoin="round" /><line x1="1625.5" y1="718.8" x2="1710.5" y2="758.7" stroke="#c4c4c4" stroke-width="5.0" stroke-dasharray="1.83 3.39" opacity="0.75"/><polygon points="1623.7,705.2 1714.2,747.7 1714.2,754.7 1623.7,712.2" fill="#6c6c6c" stroke="#333" stroke-width="0.7" stroke-linejoin="round" /><polygon points="1714.2,747.7 1766.8,731.7 1766.8,738.7 1714.2,754.7" fill="#7a7a7a" stroke="#333" stroke-width="0.7" stroke-linejoin="round" /><polygon points="1623.7,705.2 1676.3,689.2 1766.8,731.7 1714.2,747.7" fill="#858585" stroke="#333" stroke-width="0.7" stroke-linejoin="round" /><ellipse cx="1749.3" cy="728.6" rx="3.5" ry="2" fill="#333"/><polygon points="1530.0,844.2 1607.8,880.8 1607.8,885.8 1530.0,849.2" fill="#4a4a4a" stroke="#333" stroke-width="0.7" stroke-linejoin="round" /><polygon points="1607.8,880.8 1698.7,853.1 1698.7,858.1 1607.8,885.8" fill="#5a5a5a" stroke="#333" stroke-width="0.7" stroke-linejoin="round" /><polygon points="1530.0,844.2 1620.9,816.6 1698.7,853.1 1607.8,880.8" fill="#7e7e7e" stroke="#333" stroke-width="0.7" stroke-linejoin="round" /><ellipse cx="1607" cy="822" rx="4.5" ry="2.7" fill="#333"/><polygon points="1703.7,832.7 1743.5,851.4 1743.5,861.4 1703.7,842.7" fill="#6c6c6c" stroke="#333" stroke-width="0.7" stroke-linejoin="round" /><polygon points="1743.5,851.4 1815.3,829.6 1815.3,839.6 1743.5,861.4" fill="#7a7a7a" stroke="#333" stroke-width="0.7" stroke-linejoin="round" /><polygon points="1703.7,832.7 1775.5,810.9 1815.3,829.6 1743.5,851.4" fill="#858585" stroke="#333" stroke-width="0.7" stroke-linejoin="round" /><line x1="1746.4" y1="864.5" x2="1812.4" y2="844.4" stroke="#bbb" stroke-width="6" stroke-dasharray="2.2 2.3"/><polygon points="1475.3,840.4 1502.5,853.1 1502.5,863.1 1475.3,850.4" fill="#4a4a4a" stroke="#333" stroke-width="0.7" stroke-linejoin="round" /><polygon points="1502.5,853.1 1531.2,844.4 1531.2,854.4 1502.5,863.1" fill="#555" stroke="#333" stroke-width="0.7" stroke-linejoin="round" /><polygon points="1475.3,840.4 1504.0,831.7 1531.2,844.4 1502.5,853.1" fill="#6e6e6e" stroke="#333" stroke-width="0.7" stroke-linejoin="round" /><polygon points="1477.0,839.0 1504.0,831.0 1508.0,834.0 1481.0,842.0" fill="#ffffff" stroke="none" stroke-width="0.8" stroke-linejoin="round" /><polygon points="1500.0,861.0 1515.0,856.0 1515.0,864.0 1500.0,869.0" fill="#f0f0f0" stroke="none" stroke-width="0.8" stroke-linejoin="round" /><polygon points="1731.9,777.8 1751.8,787.2 1751.8,791.2 1731.9,781.8" fill="#3a3a3a" stroke="none" stroke-width="0.8" stroke-linejoin="round" /><polygon points="1753.7,787.3 1770.9,782.1 1770.9,784.9 1753.7,790.1" fill="#4a4a4a" stroke="none" stroke-width="0.8" stroke-linejoin="round" /><line x1="1732.8" y1="781.0" x2="1749.0" y2="788.6" stroke="#c4c4c4" stroke-width="2.0" stroke-dasharray="1.57 2.92" opacity="0.75"/><polygon points="1731.0,770.4 1752.7,780.6 1752.7,787.6 1731.0,777.4" fill="#6c6c6c" stroke="#333" stroke-width="0.7" stroke-linejoin="round" /><polygon points="1752.7,780.6 1771.9,774.8 1771.9,781.8 1752.7,787.6" fill="#7a7a7a" stroke="#333" stroke-width="0.7" stroke-linejoin="round" /><polygon points="1731.0,770.4 1750.1,764.6 1771.9,774.8 1752.7,780.6" fill="#858585" stroke="#333" stroke-width="0.7" stroke-linejoin="round" /><polygon points="1781.0,760.0 1795.0,756.0 1798.0,762.0 1784.0,766.0" fill="#3a3a3a" stroke="none" stroke-width="0.8" stroke-linejoin="round" /><polygon points="1788.0,776.0 1795.2,779.4 1795.2,788.4 1788.0,785.0" fill="#c9a0a0" stroke="#777" stroke-width="0.7" stroke-linejoin="round" /><polygon points="1795.2,779.4 1806.7,775.9 1806.7,784.9 1795.2,788.4" fill="#f4f4f4" stroke="#777" stroke-width="0.7" stroke-linejoin="round" /><polygon points="1788.0,776.0 1799.5,772.5 1806.7,775.9 1795.2,779.4" fill="#e8d0d0" stroke="#777" stroke-width="0.7" stroke-linejoin="round" /><polygon points="1788.0,793.0 1795.2,796.4 1795.2,805.4 1788.0,802.0" fill="#c9a0a0" stroke="#777" stroke-width="0.7" stroke-linejoin="round" /><polygon points="1795.2,796.4 1806.7,792.9 1806.7,801.9 1795.2,805.4" fill="#f4f4f4" stroke="#777" stroke-width="0.7" stroke-linejoin="round" /><polygon points="1788.0,793.0 1799.5,789.5 1806.7,792.9 1795.2,796.4" fill="#e8d0d0" stroke="#777" stroke-width="0.7" stroke-linejoin="round" /><polygon points="1800.9,762.4 1826.2,774.3 1826.2,777.3 1800.9,765.4" fill="#3a3a3a" stroke="none" stroke-width="0.8" stroke-linejoin="round" /><polygon points="1828.1,774.5 1845.3,769.2 1845.3,771.3 1828.1,776.6" fill="#4a4a4a" stroke="none" stroke-width="0.8" stroke-linejoin="round" /><line x1="1801.8" y1="765.1" x2="1823.5" y2="775.3" stroke="#c4c4c4" stroke-width="1.5" stroke-dasharray="2.10 3.90" opacity="0.75"/><polygon points="1800.0,754.0 1827.2,766.8 1827.2,774.8 1800.0,762.0" fill="#6c6c6c" stroke="#333" stroke-width="0.7" stroke-linejoin="round" /><polygon points="1827.2,766.8 1846.3,760.9 1846.3,768.9 1827.2,774.8" fill="#7a7a7a" stroke="#333" stroke-width="0.7" stroke-linejoin="round" /><polygon points="1800.0,754.0 1819.1,748.2 1846.3,760.9 1827.2,766.8" fill="#858585" stroke="#333" stroke-width="0.7" stroke-linejoin="round" /><polygon points="1127.6,587.9 1172.0,608.8 1172.0,614.8 1127.6,593.9" fill="#3a3a3a" stroke="none" stroke-width="0.8" stroke-linejoin="round" /><polygon points="1173.8,608.9 1191.0,603.6 1191.0,607.8 1173.8,613.1" fill="#4a4a4a" stroke="none" stroke-width="0.8" stroke-linejoin="round" /><line x1="1128.5" y1="592.1" x2="1169.2" y2="611.2" stroke="#c4c4c4" stroke-width="3.0" stroke-dasharray="2.25 4.18" opacity="0.75"/><polygon points="1126.7,582.5 1172.9,604.2 1172.9,609.2 1126.7,587.5" fill="#6c6c6c" stroke="#333" stroke-width="0.7" stroke-linejoin="round" /><polygon points="1172.9,604.2 1192.0,598.4 1192.0,603.4 1172.9,609.2" fill="#7a7a7a" stroke="#333" stroke-width="0.7" stroke-linejoin="round" /><polygon points="1126.7,582.5 1145.8,576.7 1192.0,598.4 1172.9,604.2" fill="#858585" stroke="#333" stroke-width="0.7" stroke-linejoin="round" /><polygon points="1196.7,619.6 1241.0,640.5 1241.0,646.5 1196.7,625.6" fill="#3a3a3a" stroke="none" stroke-width="0.8" stroke-linejoin="round" /><polygon points="1242.9,640.6 1260.1,635.3 1260.1,639.5 1242.9,644.8" fill="#4a4a4a" stroke="none" stroke-width="0.8" stroke-linejoin="round" /><line x1="1197.6" y1="623.8" x2="1238.3" y2="642.9" stroke="#c4c4c4" stroke-width="3.0" stroke-dasharray="2.25 4.18" opacity="0.75"/><polygon points="1195.8,614.2 1242.0,635.9 1242.0,640.9 1195.8,619.2" fill="#6c6c6c" stroke="#333" stroke-width="0.7" stroke-linejoin="round" /><polygon points="1242.0,635.9 1261.1,630.1 1261.1,635.1 1242.0,640.9" fill="#7a7a7a" stroke="#333" stroke-width="0.7" stroke-linejoin="round" /><polygon points="1195.8,614.2 1214.9,608.4 1261.1,630.1 1242.0,635.9" fill="#858585" stroke="#333" stroke-width="0.7" stroke-linejoin="round" /><polygon points="1356.1,744.4 1401.4,765.7 1401.4,771.7 1356.1,750.4" fill="#3a3a3a" stroke="none" stroke-width="0.8" stroke-linejoin="round" /><polygon points="1403.2,765.8 1417.6,761.4 1417.6,765.6 1403.2,770.0" fill="#4a4a4a" stroke="none" stroke-width="0.8" stroke-linejoin="round" /><line x1="1357.0" y1="748.6" x2="1398.6" y2="768.1" stroke="#c4c4c4" stroke-width="3.0" stroke-dasharray="2.30 4.27" opacity="0.75"/><polygon points="1355.2,739.0 1402.3,761.1 1402.3,766.1 1355.2,744.0" fill="#6c6c6c" stroke="#333" stroke-width="0.7" stroke-linejoin="round" /><polygon points="1402.3,761.1 1418.5,756.2 1418.5,761.2 1402.3,766.1" fill="#7a7a7a" stroke="#333" stroke-width="0.7" stroke-linejoin="round" /><polygon points="1355.2,739.0 1371.5,734.1 1418.5,756.2 1402.3,761.1" fill="#858585" stroke="#333" stroke-width="0.7" stroke-linejoin="round" /><polygon points="1295.4,770.8 1340.7,792.1 1340.7,798.1 1295.4,776.8" fill="#3a3a3a" stroke="none" stroke-width="0.8" stroke-linejoin="round" /><polygon points="1342.5,792.2 1356.9,787.8 1356.9,792.0 1342.5,796.4" fill="#4a4a4a" stroke="none" stroke-width="0.8" stroke-linejoin="round" /><line x1="1296.3" y1="775.0" x2="1337.9" y2="794.5" stroke="#c4c4c4" stroke-width="3.0" stroke-dasharray="2.30 4.27" opacity="0.75"/><polygon points="1294.5,765.4 1341.6,787.5 1341.6,792.5 1294.5,770.4" fill="#6c6c6c" stroke="#333" stroke-width="0.7" stroke-linejoin="round" /><polygon points="1341.6,787.5 1357.8,782.6 1357.8,787.6 1341.6,792.5" fill="#7a7a7a" stroke="#333" stroke-width="0.7" stroke-linejoin="round" /><polygon points="1294.5,765.4 1310.8,760.5 1357.8,782.6 1341.6,787.5" fill="#858585" stroke="#333" stroke-width="0.7" stroke-linejoin="round" /><polygon points="1027.8,516.2 1057.0,508.0 1072.6,540.5 1072.6,552.5 1043.4,560.5 1043.4,548.5" fill="#505050" stroke="#333" stroke-width="0.7" stroke-linejoin="round" /><polygon points="1002.6,506.5 1027.8,516.2 1043.4,548.5 1043.4,560.5 1002.6,545.0" fill="#6d6d6d" stroke="#333" stroke-width="0.7" stroke-linejoin="round" /><polygon points="1043.4,548.5 1072.6,540.5 1072.6,552.5 1043.4,560.5" fill="#666" stroke="#333" stroke-width="0.6" stroke-linejoin="round" /><polygon points="1002.6,506.5 1034.6,496.3 1057.0,508.0 1027.8,516.2" fill="#7d7d7d" stroke="#333" stroke-width="0.7" stroke-linejoin="round" /><polygon points="1029.6,517.3 1036.1,515.4 1049.1,544.8 1042.6,546.7" fill="#c6c6c6" stroke="#444" stroke-width="0.6" stroke-linejoin="round" /><polygon points="1040.8,514.1 1047.3,512.2 1060.3,541.6 1053.8,543.5" fill="#c6c6c6" stroke="#444" stroke-width="0.6" stroke-linejoin="round" /><polygon points="1052.0,510.9 1058.5,509.0 1071.5,538.4 1065.0,540.3" fill="#c6c6c6" stroke="#444" stroke-width="0.6" stroke-linejoin="round" /><polygon points="989.6,527.7 1018.8,519.5 1034.4,552.0 1034.4,564.0 1005.2,572.0 1005.2,560.0" fill="#505050" stroke="#333" stroke-width="0.7" stroke-linejoin="round" /><polygon points="964.4,518.0 989.6,527.7 1005.2,560.0 1005.2,572.0 964.4,556.5" fill="#6d6d6d" stroke="#333" stroke-width="0.7" stroke-linejoin="round" /><polygon points="1005.2,560.0 1034.4,552.0 1034.4,564.0 1005.2,572.0" fill="#666" stroke="#333" stroke-width="0.6" stroke-linejoin="round" /><polygon points="964.4,518.0 996.4,507.8 1018.8,519.5 989.6,527.7" fill="#7d7d7d" stroke="#333" stroke-width="0.7" stroke-linejoin="round" /><polygon points="991.4,528.8 997.9,526.9 1010.9,556.3 1004.4,558.2" fill="#c6c6c6" stroke="#444" stroke-width="0.6" stroke-linejoin="round" /><polygon points="1002.6,525.6 1009.1,523.7 1022.1,553.1 1015.6,555.0" fill="#c6c6c6" stroke="#444" stroke-width="0.6" stroke-linejoin="round" /><polygon points="1013.8,522.4 1020.3,520.5 1033.3,549.9 1026.8,551.8" fill="#c6c6c6" stroke="#444" stroke-width="0.6" stroke-linejoin="round" /><polygon points="951.4,539.2 980.6,531.0 996.2,563.5 996.2,575.5 967.0,583.5 967.0,571.5" fill="#505050" stroke="#333" stroke-width="0.7" stroke-linejoin="round" /><polygon points="926.2,529.5 951.4,539.2 967.0,571.5 967.0,583.5 926.2,568.0" fill="#6d6d6d" stroke="#333" stroke-width="0.7" stroke-linejoin="round" /><polygon points="967.0,571.5 996.2,563.5 996.2,575.5 967.0,583.5" fill="#666" stroke="#333" stroke-width="0.6" stroke-linejoin="round" /><polygon points="926.2,529.5 958.2,519.3 980.6,531.0 951.4,539.2" fill="#7d7d7d" stroke="#333" stroke-width="0.7" stroke-linejoin="round" /><polygon points="953.2,540.3 959.7,538.4 972.7,567.8 966.2,569.7" fill="#c6c6c6" stroke="#444" stroke-width="0.6" stroke-linejoin="round" /><polygon points="964.4,537.1 970.9,535.2 983.9,564.6 977.4,566.5" fill="#c6c6c6" stroke="#444" stroke-width="0.6" stroke-linejoin="round" /><polygon points="975.6,533.9 982.1,532.0 995.1,561.4 988.6,563.3" fill="#c6c6c6" stroke="#444" stroke-width="0.6" stroke-linejoin="round" /><polygon points="913.2,550.7 942.4,542.5 958.0,575.0 958.0,587.0 928.8,595.0 928.8,583.0" fill="#505050" stroke="#333" stroke-width="0.7" stroke-linejoin="round" /><polygon points="888.0,541.0 913.2,550.7 928.8,583.0 928.8,595.0 888.0,579.5" fill="#6d6d6d" stroke="#333" stroke-width="0.7" stroke-linejoin="round" /><polygon points="928.8,583.0 958.0,575.0 958.0,587.0 928.8,595.0" fill="#666" stroke="#333" stroke-width="0.6" stroke-linejoin="round" /><polygon points="888.0,541.0 920.0,530.8 942.4,542.5 913.2,550.7" fill="#7d7d7d" stroke="#333" stroke-width="0.7" stroke-linejoin="round" /><polygon points="915.0,551.8 921.5,549.9 934.5,579.3 928.0,581.2" fill="#c6c6c6" stroke="#444" stroke-width="0.6" stroke-linejoin="round" /><polygon points="926.2,548.6 932.7,546.7 945.7,576.1 939.2,578.0" fill="#c6c6c6" stroke="#444" stroke-width="0.6" stroke-linejoin="round" /><polygon points="937.4,545.4 943.9,543.5 956.9,572.9 950.4,574.8" fill="#c6c6c6" stroke="#444" stroke-width="0.6" stroke-linejoin="round" /><path d="M888 539 Q880 556 889 575" fill="none" stroke="#d6c52a" stroke-width="4"/><path d="M925.0 536.0 Q928.0 528.0 936.0 527.0" fill="none" stroke="#2a3fd0" stroke-width="3"/><path d="M963.2 524.5 Q966.2 516.5 974.2 515.5" fill="none" stroke="#d02a2a" stroke-width="3"/><path d="M1001.4 513.0 Q1004.4 505.0 1012.4 504.0" fill="none" stroke="#3fb02a" stroke-width="3"/><polygon points="944.4,599.4 996.9,624.1 996.9,631.1 944.4,606.4" fill="#3a3a3a" stroke="none" stroke-width="0.8" stroke-linejoin="round" /><polygon points="998.8,624.2 1017.9,618.4 1017.9,623.3 998.8,629.1" fill="#4a4a4a" stroke="none" stroke-width="0.8" stroke-linejoin="round" /><line x1="945.3" y1="604.1" x2="994.1" y2="627.0" stroke="#c4c4c4" stroke-width="3.5" stroke-dasharray="2.36 4.39" opacity="0.75"/><polygon points="943.5,594.0 997.8,619.5 997.8,624.5 943.5,599.0" fill="#6c6c6c" stroke="#333" stroke-width="0.7" stroke-linejoin="round" /><polygon points="997.8,619.5 1018.9,613.1 1018.9,618.1 997.8,624.5" fill="#7a7a7a" stroke="#333" stroke-width="0.7" stroke-linejoin="round" /><polygon points="943.5,594.0 964.6,587.6 1018.9,613.1 997.8,619.5" fill="#858585" stroke="#333" stroke-width="0.7" stroke-linejoin="round" /><polygon points="993.5,580.0 1059.6,611.1 1059.6,620.1 993.5,589.0" fill="#3a3a3a" stroke="none" stroke-width="0.8" stroke-linejoin="round" /><polygon points="1061.4,611.2 1094.9,601.0 1094.9,607.3 1061.4,617.5" fill="#4a4a4a" stroke="none" stroke-width="0.8" stroke-linejoin="round" /><line x1="994.4" y1="585.7" x2="1056.8" y2="615.0" stroke="#c4c4c4" stroke-width="4.5" stroke-dasharray="3.02 5.61" opacity="0.75"/><polygon points="992.6,572.6 1060.5,604.5 1060.5,611.5 992.6,579.6" fill="#6c6c6c" stroke="#333" stroke-width="0.7" stroke-linejoin="round" /><polygon points="1060.5,604.5 1095.9,593.7 1095.9,600.7 1060.5,611.5" fill="#7a7a7a" stroke="#333" stroke-width="0.7" stroke-linejoin="round" /><polygon points="992.6,572.6 1028.0,561.8 1095.9,593.7 1060.5,604.5" fill="#858585" stroke="#333" stroke-width="0.7" stroke-linejoin="round" /><polygon points="1031.9,639.4 1084.4,664.1 1084.4,671.1 1031.9,646.4" fill="#3a3a3a" stroke="none" stroke-width="0.8" stroke-linejoin="round" /><polygon points="1086.3,664.2 1105.4,658.4 1105.4,663.3 1086.3,669.1" fill="#4a4a4a" stroke="none" stroke-width="0.8" stroke-linejoin="round" /><line x1="1032.8" y1="644.1" x2="1081.6" y2="667.0" stroke="#c4c4c4" stroke-width="3.5" stroke-dasharray="2.36 4.39" opacity="0.75"/><polygon points="1031.0,634.0 1085.3,659.5 1085.3,664.5 1031.0,639.0" fill="#6c6c6c" stroke="#333" stroke-width="0.7" stroke-linejoin="round" /><polygon points="1085.3,659.5 1106.4,653.1 1106.4,658.1 1085.3,664.5" fill="#7a7a7a" stroke="#333" stroke-width="0.7" stroke-linejoin="round" /><polygon points="1031.0,634.0 1052.1,627.6 1106.4,653.1 1085.3,659.5" fill="#858585" stroke="#333" stroke-width="0.7" stroke-linejoin="round" /><polygon points="1080.9,619.9 1147.0,651.0 1147.0,660.0 1080.9,628.9" fill="#3a3a3a" stroke="none" stroke-width="0.8" stroke-linejoin="round" /><polygon points="1148.8,651.1 1182.3,640.9 1182.3,647.2 1148.8,657.4" fill="#4a4a4a" stroke="none" stroke-width="0.8" stroke-linejoin="round" /><line x1="1081.8" y1="625.6" x2="1144.2" y2="654.9" stroke="#c4c4c4" stroke-width="4.5" stroke-dasharray="3.02 5.61" opacity="0.75"/><polygon points="1080.0,612.5 1147.9,644.4 1147.9,651.4 1080.0,619.5" fill="#6c6c6c" stroke="#333" stroke-width="0.7" stroke-linejoin="round" /><polygon points="1147.9,644.4 1183.3,633.6 1183.3,640.6 1147.9,651.4" fill="#7a7a7a" stroke="#333" stroke-width="0.7" stroke-linejoin="round" /><polygon points="1080.0,612.5 1115.4,601.7 1183.3,633.6 1147.9,644.4" fill="#858585" stroke="#333" stroke-width="0.7" stroke-linejoin="round" /><polygon points="1119.2,679.6 1171.7,704.3 1171.7,711.3 1119.2,686.6" fill="#3a3a3a" stroke="none" stroke-width="0.8" stroke-linejoin="round" /><polygon points="1173.6,704.4 1192.7,698.6 1192.7,703.5 1173.6,709.3" fill="#4a4a4a" stroke="none" stroke-width="0.8" stroke-linejoin="round" /><line x1="1120.1" y1="684.3" x2="1168.9" y2="707.2" stroke="#c4c4c4" stroke-width="3.5" stroke-dasharray="2.36 4.39" opacity="0.75"/><polygon points="1118.3,674.2 1172.6,699.7 1172.6,704.7 1118.3,679.2" fill="#6c6c6c" stroke="#333" stroke-width="0.7" stroke-linejoin="round" /><polygon points="1172.6,699.7 1193.7,693.3 1193.7,698.3 1172.6,704.7" fill="#7a7a7a" stroke="#333" stroke-width="0.7" stroke-linejoin="round" /><polygon points="1118.3,674.2 1139.4,667.8 1193.7,693.3 1172.6,699.7" fill="#858585" stroke="#333" stroke-width="0.7" stroke-linejoin="round" /><polygon points="1169.2,660.7 1235.3,691.8 1235.3,700.8 1169.2,669.7" fill="#3a3a3a" stroke="none" stroke-width="0.8" stroke-linejoin="round" /><polygon points="1237.1,691.9 1270.6,681.7 1270.6,688.0 1237.1,698.2" fill="#4a4a4a" stroke="none" stroke-width="0.8" stroke-linejoin="round" /><line x1="1170.1" y1="666.4" x2="1232.5" y2="695.7" stroke="#c4c4c4" stroke-width="4.5" stroke-dasharray="3.02 5.61" opacity="0.75"/><polygon points="1168.3,653.3 1236.2,685.2 1236.2,692.2 1168.3,660.3" fill="#6c6c6c" stroke="#333" stroke-width="0.7" stroke-linejoin="round" /><polygon points="1236.2,685.2 1271.6,674.4 1271.6,681.4 1236.2,692.2" fill="#7a7a7a" stroke="#333" stroke-width="0.7" stroke-linejoin="round" /><polygon points="1168.3,653.3 1203.7,642.5 1271.6,674.4 1236.2,685.2" fill="#858585" stroke="#333" stroke-width="0.7" stroke-linejoin="round" /><polygon points="1207.6,720.4 1260.1,745.1 1260.1,752.1 1207.6,727.4" fill="#3a3a3a" stroke="none" stroke-width="0.8" stroke-linejoin="round" /><polygon points="1262.0,745.2 1281.1,739.4 1281.1,744.3 1262.0,750.1" fill="#4a4a4a" stroke="none" stroke-width="0.8" stroke-linejoin="round" /><line x1="1208.5" y1="725.1" x2="1257.3" y2="748.0" stroke="#c4c4c4" stroke-width="3.5" stroke-dasharray="2.36 4.39" opacity="0.75"/><polygon points="1206.7,715.0 1261.0,740.5 1261.0,745.5 1206.7,720.0" fill="#6c6c6c" stroke="#333" stroke-width="0.7" stroke-linejoin="round" /><polygon points="1261.0,740.5 1282.1,734.1 1282.1,739.1 1261.0,745.5" fill="#7a7a7a" stroke="#333" stroke-width="0.7" stroke-linejoin="round" /><polygon points="1206.7,715.0 1227.8,708.6 1282.1,734.1 1261.0,740.5" fill="#858585" stroke="#333" stroke-width="0.7" stroke-linejoin="round" /><polygon points="1255.3,701.8 1321.4,732.9 1321.4,741.9 1255.3,710.8" fill="#3a3a3a" stroke="none" stroke-width="0.8" stroke-linejoin="round" /><polygon points="1323.2,733.0 1356.7,722.8 1356.7,729.1 1323.2,739.3" fill="#4a4a4a" stroke="none" stroke-width="0.8" stroke-linejoin="round" /><line x1="1256.2" y1="707.5" x2="1318.6" y2="736.8" stroke="#c4c4c4" stroke-width="4.5" stroke-dasharray="3.02 5.61" opacity="0.75"/><polygon points="1254.4,694.4 1322.3,726.3 1322.3,733.3 1254.4,701.4" fill="#6c6c6c" stroke="#333" stroke-width="0.7" stroke-linejoin="round" /><polygon points="1322.3,726.3 1357.7,715.5 1357.7,722.5 1322.3,733.3" fill="#7a7a7a" stroke="#333" stroke-width="0.7" stroke-linejoin="round" /><polygon points="1254.4,694.4 1289.8,683.6 1357.7,715.5 1322.3,726.3" fill="#858585" stroke="#333" stroke-width="0.7" stroke-linejoin="round" /><path d="M1002.0 620.0 L998.0 632.0 L998.0 660.0" fill="none" stroke="#e8e8e8" stroke-width="2.4"/><path d="M1023.0 616.0 L1026.0 624.0 L1026.0 652.0" fill="none" stroke="#e8e8e8" stroke-width="2.4"/><path d="M998.0 632.0 L998.0 660.0 M1026.0 624.0 L1026.0 652.0" fill="none" stroke="#a8a8a8" stroke-width="0.6"/><path d="M995.5 592.0 Q995.5 582.0 1006.0 579.0 L1020.0 574.0 Q1030.0 572.0 1030.0 583.0 L1030.0 611.0 Q1030.0 615.0 1025.0 616.0 L1003.0 620.5 Q996.0 622.0 995.5 615.0 Z" fill="#4a8746" stroke="#2b552a" stroke-width="1"/><path d="M997.0 590.0 Q1000.0 582.0 1007.0 581.0 L1020.0 577.0 Q1027.0 576.0 1028.0 583.0" fill="none" stroke="#6fae66" stroke-width="2.5"/><path d="M1013.0 578.0 L1013.0 618.0 M996.0 594.0 L1029.0 587.0" fill="none" stroke="#2f5e2e" stroke-width="0.9"/><path d="M1089.3 660.7 L1085.3 672.7 L1085.3 700.7" fill="none" stroke="#e8e8e8" stroke-width="2.4"/><path d="M1110.3 656.7 L1113.3 664.7 L1113.3 692.7" fill="none" stroke="#e8e8e8" stroke-width="2.4"/><path d="M1085.3 672.7 L1085.3 700.7 M1113.3 664.7 L1113.3 692.7" fill="none" stroke="#a8a8a8" stroke-width="0.6"/><path d="M1082.8 632.7 Q1082.8 622.7 1093.3 619.7 L1107.3 614.7 Q1117.3 612.7 1117.3 623.7 L1117.3 651.7 Q1117.3 655.7 1112.3 656.7 L1090.3 661.2 Q1083.3 662.7 1082.8 655.7 Z" fill="#4a8746" stroke="#2b552a" stroke-width="1"/><path d="M1084.3 630.7 Q1087.3 622.7 1094.3 621.7 L1107.3 617.7 Q1114.3 616.7 1115.3 623.7" fill="none" stroke="#6fae66" stroke-width="2.5"/><path d="M1100.3 618.7 L1100.3 658.7 M1083.3 634.7 L1116.3 627.7" fill="none" stroke="#2f5e2e" stroke-width="0.9"/><path d="M1176.6 701.4 L1172.6 713.4 L1172.6 741.4" fill="none" stroke="#e8e8e8" stroke-width="2.4"/><path d="M1197.6 697.4 L1200.6 705.4 L1200.6 733.4" fill="none" stroke="#e8e8e8" stroke-width="2.4"/><path d="M1172.6 713.4 L1172.6 741.4 M1200.6 705.4 L1200.6 733.4" fill="none" stroke="#a8a8a8" stroke-width="0.6"/><path d="M1170.1 673.4 Q1170.1 663.4 1180.6 660.4 L1194.6 655.4 Q1204.6 653.4 1204.6 664.4 L1204.6 692.4 Q1204.6 696.4 1199.6 697.4 L1177.6 701.9 Q1170.6 703.4 1170.1 696.4 Z" fill="#4a8746" stroke="#2b552a" stroke-width="1"/><path d="M1171.6 671.4 Q1174.6 663.4 1181.6 662.4 L1194.6 658.4 Q1201.6 657.4 1202.6 664.4" fill="none" stroke="#6fae66" stroke-width="2.5"/><path d="M1187.6 659.4 L1187.6 699.4 M1170.6 675.4 L1203.6 668.4" fill="none" stroke="#2f5e2e" stroke-width="0.9"/><path d="M1263.9 742.1 L1259.9 754.1 L1259.9 782.1" fill="none" stroke="#e8e8e8" stroke-width="2.4"/><path d="M1284.9 738.1 L1287.9 746.1 L1287.9 774.1" fill="none" stroke="#e8e8e8" stroke-width="2.4"/><path d="M1259.9 754.1 L1259.9 782.1 M1287.9 746.1 L1287.9 774.1" fill="none" stroke="#a8a8a8" stroke-width="0.6"/><path d="M1257.4 714.1 Q1257.4 704.1 1267.9 701.1 L1281.9 696.1 Q1291.9 694.1 1291.9 705.1 L1291.9 733.1 Q1291.9 737.1 1286.9 738.1 L1264.9 742.6 Q1257.9 744.1 1257.4 737.1 Z" fill="#4a8746" stroke="#2b552a" stroke-width="1"/><path d="M1258.9 712.1 Q1261.9 704.1 1268.9 703.1 L1281.9 699.1 Q1288.9 698.1 1289.9 705.1" fill="none" stroke="#6fae66" stroke-width="2.5"/><path d="M1274.9 700.1 L1274.9 740.1 M1257.9 716.1 L1290.9 709.1" fill="none" stroke="#2f5e2e" stroke-width="0.9"/><rect x="1263" y="662" width="15" height="15" fill="none" stroke="#4a5fc0" stroke-width="1.2"/><line x1="1263" y1="677" x2="1238" y2="700" stroke="#4a5fc0" stroke-width="1.2"/><rect x="1563" y="648" width="18" height="18" fill="none" stroke="#4a5fc0" stroke-width="1.2"/><line x1="1565" y1="663" x2="1543" y2="682" stroke="#4a5fc0" stroke-width="1.2"/><text x="1566" y="661" font-size="9" fill="#4a5fc0" font-family="Liberation Sans">o&#916;</text><path d="M889.5 548 L892.5 566 L889.5 612 L886.5 566 Z" fill="#1f3fd8"/><path d="M895 612 L930 597 L932 601 Z" fill="#3aa43a"/><path d="M893 617 L925 631 L922 634 Z" fill="#c8302a"/><text x="896" y="561" font-size="12" fill="#3a50e0" font-family="Liberation Sans">ZC</text><text x="917" y="596" font-size="11" fill="#6ab86a" font-family="Liberation Sans">YC</text><text x="910" y="648" font-size="12" fill="#d04040" font-family="Liberation Sans">XC</text></g></svg>
<svg width="120" height="140" style="position:absolute;left:850px;top:915px" viewBox="850 915 120 140">
<g fill="none" stroke="#c4c4c4" stroke-width="1.1">
<path d="M862.2 988.9 L890.4 980 L925.2 991.9 L925.2 1033.3 L890.4 1043.7 L862.2 1031.1 Z"/>
<path d="M862.2 988.9 L890.4 1002.2 L925.2 991.9 M890.4 1002.2 L890.4 1043.7"/>
</g>
<rect x="891" y="957" width="5" height="34" fill="#1434d0"/>
<path d="M887.5 960 L893.5 939 L899.5 960 Z" fill="#1434d0"/>
<path d="M926 1001.5 L940 996 L938 992 L954 993 L942 1003 L941 999.5 L926 1005 Z" fill="#4da44a"/>
<path d="M908 1017 L930 1027 L933 1023 L942 1035 L926 1033 L928 1030 L906 1021 Z" fill="#c8352e"/>
<text x="888" y="935" font-size="12" fill="#3a50e0" font-family="Liberation Sans">Z</text>
<text x="957" y="996" font-size="12" fill="#5aa85a" font-family="Liberation Sans">Y</text>
<text x="945" y="1042" font-size="12" fill="#c84040" font-family="Liberation Sans">X</text>
</svg>
<div style="position:absolute;left:107px;top:26.8px;width:809px;height:362.7px;background:#f0f0f0"></div>
<div style="position:absolute;left:107px;top:2px;width:809px;height:24.8px;background:#255b89"></div>
<div style="position:absolute;left:112.5px;top:6px;width:16px;height:16px"><svg width="16" height="16" viewBox="0 0 16 16"><path fill="#fff" fill-rule="evenodd" d="M8 0.3 L9.3 2.2 L11.6 1.6 L11.9 3.9 L14.2 4.4 L13.6 6.6 L15.5 8 L13.6 9.4 L14.2 11.6 L11.9 12.1 L11.6 14.4 L9.3 13.8 L8 15.7 L6.7 13.8 L4.4 14.4 L4.1 12.1 L1.8 11.6 L2.4 9.4 L0.5 8 L2.4 6.6 L1.8 4.4 L4.1 3.9 L4.4 1.6 L6.7 2.2 Z M8 4.6 A3.4 3.4 0 1 0 8.01 4.6 Z M8 6.6 A1.4 1.4 0 1 1 7.99 6.6 Z"/></svg></div>
<div style="position:absolute;left:137.8px;top:8.24px;font-size:14.6px;line-height:14.6px;color:#fff;white-space:pre;letter-spacing:0px;">Customer Defaults</div>
<div style="position:absolute;left:876px;top:4px;width:14px;height:20px;font-size:17px;line-height:20px;font-weight:bold;color:#fff;text-align:center">?</div>
<svg width="14" height="14" style="position:absolute;left:898px;top:7px"><path d="M1.5 1.5 L12.5 12.5 M12.5 1.5 L1.5 12.5" stroke="#fff" stroke-width="2.4"/></svg>
<div style="position:absolute;left:227.5px;top:42.57px;font-size:12.2px;line-height:12.2px;color:#1a1a1a;white-space:pre;letter-spacing:0px;">Defaults Level</div>
<div style="position:absolute;left:310px;top:35px;width:146px;height:24.5px;border:1px solid #8a8a8a;background:#fff;overflow:hidden"></div>
<div style="position:absolute;left:316px;top:41.58px;font-size:12.6px;line-height:12.6px;color:#1a1a1a;white-space:pre;letter-spacing:0px;">User</div>
<svg width="10" height="6" style="position:absolute;left:440.5px;top:45.25px"><path d="M0.5 0.5 L9.5 0.5 L5 5.5 Z" fill="#111"/></svg>
<div style="position:absolute;left:458.75px;top:42.32px;font-size:12.5px;line-height:12.5px;color:#a9a9a9;white-space:pre;letter-spacing:0px;">Default Lock State</div>
<div style="position:absolute;left:566px;top:35px;width:82px;height:24.5px;border:1px solid #cfcfcf;background:#fafafa;overflow:hidden"></div>
<div style="position:absolute;left:572px;top:41.58px;font-size:12.6px;line-height:12.6px;color:#8a8a8a;white-space:pre;letter-spacing:0px;">Unlocked</div>
<svg width="10" height="6" style="position:absolute;left:632.5px;top:45.25px"><path d="M0.5 0.5 L9.5 0.5 L5 5.5 Z" fill="#a0a0a0"/></svg>
<div style="position:absolute;left:651px;top:42.57px;font-size:12.2px;line-height:12.2px;color:#1a1a1a;white-space:pre;letter-spacing:0px;">Units System</div>
<div style="position:absolute;left:729px;top:35px;width:110px;height:24.5px;border:1px solid #8a8a8a;background:#fff;overflow:hidden"></div>
<div style="position:absolute;left:734.6px;top:41.58px;font-size:12.6px;line-height:12.6px;color:#1a1a1a;white-space:pre;letter-spacing:0px;">Metric</div>
<svg width="10" height="6" style="position:absolute;left:823.5px;top:45.25px"><path d="M0.5 0.5 L9.5 0.5 L5 5.5 Z" fill="#111"/></svg>
<div style="position:absolute;left:841px;top:35.5px;width:34px;height:34px;border:1.5px solid #8c8c8c;background:#f0f0f0"></div>
<svg width="30" height="30" viewBox="0 0 30 30" style="position:absolute;left:843px;top:37.5px"><g fill="none" stroke="#333" stroke-width="1.3"><rect x="6" y="4" width="4" height="4"/><rect x="19" y="4" width="4" height="4"/><path d="M6 8 L5 13 L3 22 L3 28 L12 28 L12 13 L10 8"/><path d="M19 8 L18 13 L18 28 L27 28 L27 22 L25 13 L23 8"/><path d="M3 22 L12 22 M18 22 L27 22 M12 14 L18 14 M12 19 L18 19"/></g></svg>
<div style="position:absolute;left:877.8px;top:35.5px;width:34px;height:34px;border:1.5px solid #8c8c8c;background:#f0f0f0"></div>
<svg width="30" height="30" viewBox="0 0 30 30" style="position:absolute;left:880px;top:37.5px"><g fill="none" stroke="#333" stroke-width="1.3"><path d="M15 3.2 L17.2 5.8 L20.3 4.6 L21.2 7.9 L24.5 8.6 L23.9 12 L26.6 14.2 L24.4 16.8 L25.6 19.9 L22.3 20.8 L21.6 24.1 L18.2 23.5 L16 26.2 L13.8 23.5 L10.4 24.1 L9.7 20.8 L6.4 19.9 L7.6 16.8 L5.4 14.2 L8.1 12 L7.5 8.6 L10.8 7.9 L11.7 4.6 L14.8 5.8 Z"/><circle cx="15" cy="14.7" r="3.6"/></g></svg>
<div style="position:absolute;left:119.6px;top:74.4px;width:303px;height:315px;background:#fff;border:1px solid #dcdcdc;border-bottom:none"></div>
<div style="position:absolute;left:120.6px;top:96.22999999999999px;width:282px;height:1px;background:#ececec"></div>
<div style="position:absolute;left:0;top:0;width:1920px;height:389.5px;overflow:hidden;pointer-events:none">
<div style="position:absolute;left:124.6px;top:80.79px;font-size:12.3px;line-height:12.3px;color:#1e1e1e;white-space:pre;letter-spacing:0px;">PCB Exchange</div>
</div>
<div style="position:absolute;left:141.7px;top:97.02999999999999px;width:260px;height:20.83px;background:#d2e4eb"></div>
<div style="position:absolute;left:120.6px;top:117.66px;width:282px;height:1px;background:#ececec"></div>
<div style="position:absolute;left:0;top:0;width:1920px;height:389.5px;overflow:hidden;pointer-events:none">
<div style="position:absolute;left:144.6px;top:102.22px;font-size:12.3px;line-height:12.3px;color:#1e1e1e;white-space:pre;letter-spacing:0px;">General</div>
</div>
<div style="position:absolute;left:131px;top:107.42999999999999px;width:9px;height:1px;border-top:1px dotted #a0a0a0"></div>
<div style="position:absolute;left:120.6px;top:139.09px;width:282px;height:1px;background:#ececec"></div>
<div style="position:absolute;left:0;top:0;width:1920px;height:389.5px;overflow:hidden;pointer-events:none">
<div style="position:absolute;left:144.6px;top:123.65px;font-size:12.3px;line-height:12.3px;color:#1e1e1e;white-space:pre;letter-spacing:0px;">Board</div>
</div>
<div style="position:absolute;left:131px;top:128.85999999999999px;width:9px;height:1px;border-top:1px dotted #a0a0a0"></div>
<div style="position:absolute;left:120.6px;top:139.58999999999997px;width:282px;height:21.43px;background:#f8f8f8"></div>
<div style="position:absolute;left:120.6px;top:160.51999999999998px;width:282px;height:1px;background:#ececec"></div>
<div style="position:absolute;left:0;top:0;width:1920px;height:389.5px;overflow:hidden;pointer-events:none">
<div style="position:absolute;left:144.6px;top:145.08px;font-size:12.3px;line-height:12.3px;color:#1e1e1e;white-space:pre;letter-spacing:0px;">Component</div>
</div>
<div style="position:absolute;left:131px;top:150.28999999999996px;width:9px;height:1px;border-top:1px dotted #a0a0a0"></div>
<div style="position:absolute;left:120.6px;top:181.95px;width:282px;height:1px;background:#ececec"></div>
<div style="position:absolute;left:0;top:0;width:1920px;height:389.5px;overflow:hidden;pointer-events:none">
<div style="position:absolute;left:144.6px;top:166.51px;font-size:12.3px;line-height:12.3px;color:#1e1e1e;white-space:pre;letter-spacing:0px;">Hole</div>
</div>
<div style="position:absolute;left:131px;top:171.71999999999997px;width:9px;height:1px;border-top:1px dotted #a0a0a0"></div>
<div style="position:absolute;left:120.6px;top:182.45px;width:282px;height:21.43px;background:#f8f8f8"></div>
<div style="position:absolute;left:120.6px;top:203.38px;width:282px;height:1px;background:#ececec"></div>
<div style="position:absolute;left:0;top:0;width:1920px;height:389.5px;overflow:hidden;pointer-events:none">
<div style="position:absolute;left:144.6px;top:187.94px;font-size:12.3px;line-height:12.3px;color:#1e1e1e;white-space:pre;letter-spacing:0px;">Area</div>
</div>
<div style="position:absolute;left:131px;top:193.14999999999998px;width:9px;height:1px;border-top:1px dotted #a0a0a0"></div>
<div style="position:absolute;left:120.6px;top:224.81px;width:282px;height:1px;background:#ececec"></div>
<div style="position:absolute;left:0;top:0;width:1920px;height:389.5px;overflow:hidden;pointer-events:none">
<div style="position:absolute;left:144.6px;top:209.37px;font-size:12.3px;line-height:12.3px;color:#1e1e1e;white-space:pre;letter-spacing:0px;">Copper Trace/Pad</div>
</div>
<div style="position:absolute;left:131px;top:214.57999999999998px;width:9px;height:1px;border-top:1px dotted #a0a0a0"></div>
<div style="position:absolute;left:120.6px;top:225.31px;width:282px;height:21.43px;background:#f8f8f8"></div>
<div style="position:absolute;left:120.6px;top:246.24px;width:282px;height:1px;background:#ececec"></div>
<div style="position:absolute;left:0;top:0;width:1920px;height:389.5px;overflow:hidden;pointer-events:none">
<div style="position:absolute;left:144.6px;top:230.80px;font-size:12.3px;line-height:12.3px;color:#1e1e1e;white-space:pre;letter-spacing:0px;">Mask</div>
</div>
<div style="position:absolute;left:131px;top:236.01px;width:9px;height:1px;border-top:1px dotted #a0a0a0"></div>
<div style="position:absolute;left:120.6px;top:267.67px;width:282px;height:1px;background:#ececec"></div>
<div style="position:absolute;left:0;top:0;width:1920px;height:389.5px;overflow:hidden;pointer-events:none">
<div style="position:absolute;left:144.6px;top:252.23px;font-size:12.3px;line-height:12.3px;color:#1e1e1e;white-space:pre;letter-spacing:0px;">Generic Shape</div>
</div>
<div style="position:absolute;left:131px;top:257.44px;width:9px;height:1px;border-top:1px dotted #a0a0a0"></div>
<div style="position:absolute;left:120.6px;top:268.17px;width:282px;height:21.43px;background:#f8f8f8"></div>
<div style="position:absolute;left:120.6px;top:289.1px;width:282px;height:1px;background:#ececec"></div>
<div style="position:absolute;left:0;top:0;width:1920px;height:389.5px;overflow:hidden;pointer-events:none">
<div style="position:absolute;left:144.6px;top:273.66px;font-size:12.3px;line-height:12.3px;color:#1e1e1e;white-space:pre;letter-spacing:0px;">ECAD Integration</div>
</div>
<div style="position:absolute;left:131px;top:278.87px;width:9px;height:1px;border-top:1px dotted #a0a0a0"></div>
<div style="position:absolute;left:120.6px;top:310.53000000000003px;width:282px;height:1px;background:#ececec"></div>
<div style="position:absolute;left:0;top:0;width:1920px;height:389.5px;overflow:hidden;pointer-events:none">
<div style="position:absolute;left:144.6px;top:295.09px;font-size:12.3px;line-height:12.3px;color:#1e1e1e;white-space:pre;letter-spacing:0px;">Simulation</div>
</div>
<div style="position:absolute;left:131px;top:300.3px;width:9px;height:1px;border-top:1px dotted #a0a0a0"></div>
<div style="position:absolute;left:120.6px;top:311.03px;width:282px;height:21.43px;background:#f8f8f8"></div>
<div style="position:absolute;left:120.6px;top:331.96px;width:282px;height:1px;background:#ececec"></div>
<div style="position:absolute;left:0;top:0;width:1920px;height:389.5px;overflow:hidden;pointer-events:none">
<div style="position:absolute;left:124.6px;top:316.52px;font-size:12.3px;line-height:12.3px;color:#1e1e1e;white-space:pre;letter-spacing:0px;">Industrial Electrical Design</div>
</div>
<div style="position:absolute;left:120.6px;top:353.39px;width:282px;height:1px;background:#ececec"></div>
<div style="position:absolute;left:0;top:0;width:1920px;height:389.5px;overflow:hidden;pointer-events:none">
<div style="position:absolute;left:124.6px;top:337.95px;font-size:12.3px;line-height:12.3px;color:#1e1e1e;white-space:pre;letter-spacing:0px;">Sheet Metal</div>
</div>
<div style="position:absolute;left:120.6px;top:353.89px;width:282px;height:21.43px;background:#f8f8f8"></div>
<div style="position:absolute;left:120.6px;top:374.82px;width:282px;height:1px;background:#ececec"></div>
<div style="position:absolute;left:0;top:0;width:1920px;height:389.5px;overflow:hidden;pointer-events:none">
<div style="position:absolute;left:124.6px;top:359.38px;font-size:12.3px;line-height:12.3px;color:#1e1e1e;white-space:pre;letter-spacing:0px;">Sheet Metal (Forming and Flattening)</div>
</div>
<div style="position:absolute;left:0;top:0;width:1920px;height:389.5px;overflow:hidden;pointer-events:none">
<div style="position:absolute;left:124.6px;top:380.81px;font-size:12.3px;line-height:12.3px;color:#1e1e1e;white-space:pre;letter-spacing:0px;">Routing</div>
</div>
<div style="position:absolute;left:130.5px;top:107px;width:1px;height:193.8px;border-left:1px dotted #a0a0a0"></div>
<div style="position:absolute;left:403px;top:75.4px;width:17px;height:314px;background:#f0f0f0"></div>
<div style="position:absolute;left:403.7px;top:293.5px;width:15.6px;height:96px;background:#cdcdcd"></div>
<svg width="12" height="8" style="position:absolute;left:405px;top:82px"><path d="M2 6 L6 2 L10 6" fill="none" stroke="#444" stroke-width="2"/></svg>
<div style="position:absolute;left:433.5px;top:75px;width:1px;height:315px;background:#d4d4d4"></div>
<div style="position:absolute;left:436px;top:76px;width:142px;height:28.5px;background:#f0f0f0;border:1px solid #d6d6d6;"></div>
<div style="position:absolute;left:307.5px;width:400px;text-align:center;top:85.23px;font-size:12.6px;line-height:12.6px;color:#1a1a1a;white-space:pre;letter-spacing:0px;">Navigator</div>
<div style="position:absolute;left:577.5px;top:76px;width:206.0px;height:28.5px;background:#f0f0f0;border:1px solid #d6d6d6;"></div>
<div style="position:absolute;left:481px;width:400px;text-align:center;top:85.23px;font-size:12.6px;line-height:12.6px;color:#1a1a1a;white-space:pre;letter-spacing:0px;">Design Rule Manager</div>
<div style="position:absolute;left:783px;top:76px;width:124.5px;height:28.5px;background:#f0f0f0;border:1px solid #d6d6d6;"></div>
<div style="position:absolute;left:646px;width:400px;text-align:center;top:85.23px;font-size:12.6px;line-height:12.6px;color:#1a1a1a;white-space:pre;letter-spacing:0px;">Hooks</div>
<div style="position:absolute;left:436px;top:104px;width:101px;height:28.5px;background:#f0f0f0;border:1px solid #d6d6d6;"></div>
<div style="position:absolute;left:287px;width:400px;text-align:center;top:112.73px;font-size:12.6px;line-height:12.6px;color:#1a1a1a;white-space:pre;letter-spacing:0px;">PCA</div>
<div style="position:absolute;left:667.5px;top:104px;width:100.0px;height:28.5px;background:#f0f0f0;border:1px solid #d6d6d6;"></div>
<div style="position:absolute;left:517.5px;width:400px;text-align:center;top:112.73px;font-size:12.6px;line-height:12.6px;color:#1a1a1a;white-space:pre;letter-spacing:0px;">Report</div>
<div style="position:absolute;left:767px;top:104px;width:140.5px;height:28.5px;background:#f0f0f0;border:1px solid #d6d6d6;"></div>
<div style="position:absolute;left:638px;width:400px;text-align:center;top:112.73px;font-size:12.6px;line-height:12.6px;color:#1a1a1a;white-space:pre;letter-spacing:0px;">Preview Color</div>
<div style="position:absolute;left:433.6px;top:132px;width:475.5px;height:258px;background:#fff;border:1px solid #d6d6d6;border-bottom:none"></div>
<div style="position:absolute;left:536.5px;top:102.3px;width:131.79999999999995px;height:31.200000000000003px;background:#fff;border:1px solid #d6d6d6;border-bottom:none;"></div>
<div style="position:absolute;left:404px;width:400px;text-align:center;top:112.73px;font-size:12.6px;line-height:12.6px;color:#2a6aa0;white-space:pre;letter-spacing:0px;">Teamcenter</div>
<div style="position:absolute;left:441px;top:137px;width:460px;height:253px;border-left:1px solid #e6e6e6;border-top:1px solid #e6e6e6"></div>
<div style="position:absolute;left:884px;top:138px;width:17px;height:252px;background:#f0f0f0"></div>
<div style="position:absolute;left:884.4px;top:156.8px;width:15.2px;height:146.8px;background:#cdcdcd"></div>
<svg width="12" height="8" style="position:absolute;left:886px;top:144px"><path d="M2 6 L6 2 L10 6" fill="none" stroke="#444" stroke-width="2"/></svg>
<div style="position:absolute;left:454.7px;top:146.23px;font-size:12.6px;line-height:12.6px;color:#2d6db0;white-space:pre;letter-spacing:0px;">Item Load/Creation</div>
<div style="position:absolute;left:455.2px;top:255.53px;font-size:12.6px;line-height:12.6px;color:#1a1a1a;white-space:pre;letter-spacing:0px;">Search for Components</div>
<div style="position:absolute;left:739.5px;top:250.5px;width:109.0px;height:24.0px;border:1px solid #8a8a8a;background:#fff;overflow:hidden"></div>
<div style="position:absolute;left:745px;top:256.83px;font-size:12.6px;line-height:12.6px;color:#1a1a1a;white-space:pre;letter-spacing:0px;">By Item ID</div>
<svg width="10" height="6" style="position:absolute;left:833.0px;top:260.5px"><path d="M0.5 0.5 L9.5 0.5 L5 5.5 Z" fill="#111"/></svg>
<svg width="18" height="18" style="position:absolute;left:849.8px;top:250px"><circle cx="9" cy="9" r="7.3" fill="none" stroke="#333" stroke-width="1.3"/><path d="M6.6 6.9 Q6.6 4.6 9 4.6 Q11.4 4.6 11.4 6.7 Q11.4 8.1 9.6 8.9 Q9 9.3 9 10.4" fill="none" stroke="#333" stroke-width="1.2"/><circle cx="9" cy="12.9" r="0.8" fill="#333"/></svg>
<div style="position:absolute;left:0;top:0;width:1920px;height:296px;overflow:hidden">
<div style="position:absolute;left:455.5px;top:284.23px;font-size:12.6px;line-height:12.6px;color:#1a1a1a;white-space:pre;letter-spacing:0px;">Naming Convention for New Items</div>
<div style="position:absolute;left:675.5px;top:279.8px;width:173.0px;height:24.0px;border:1px solid #8a8a8a;background:#fff;overflow:hidden"></div>
<div style="position:absolute;left:681.4px;top:286.13px;font-size:12.6px;line-height:12.6px;color:#1a1a1a;white-space:pre;letter-spacing:0px;">Component Part Number</div>
<svg width="10" height="6" style="position:absolute;left:833.0px;top:289.8px"><path d="M0.5 0.5 L9.5 0.5 L5 5.5 Z" fill="#111"/></svg>
</div>
<svg width="18" height="18" style="position:absolute;left:849.8px;top:278.5px"><circle cx="9" cy="9" r="7.3" fill="none" stroke="#333" stroke-width="1.3"/><path d="M6.6 6.9 Q6.6 4.6 9 4.6 Q11.4 4.6 11.4 6.7 Q11.4 8.1 9.6 8.9 Q9 9.3 9 10.4" fill="none" stroke="#333" stroke-width="1.2"/><circle cx="9" cy="12.9" r="0.8" fill="#333"/></svg>
<div style="position:absolute;left:441px;top:151px;width:441px;height:98px;border:8.3px solid #3d9396;background:#fff"></div>
<div style="position:absolute;left:455.3px;top:171.73px;font-size:12.6px;line-height:12.6px;color:#1a1a1a;white-space:pre;letter-spacing:0px;">Source of Component Refe</div>
<div style="position:absolute;left:610.2px;top:167.5px;width:238.29999999999995px;height:24.0px;border:1px solid #8a8a8a;background:#fff;overflow:hidden"></div>
<div style="position:absolute;left:616.3px;top:173.83px;font-size:12.6px;line-height:12.6px;color:#1a1a1a;white-space:pre;letter-spacing:0px;">ref_designator Instance Attribute</div>
<svg width="10" height="6" style="position:absolute;left:833.0px;top:177.5px"><path d="M0.5 0.5 L9.5 0.5 L5 5.5 Z" fill="#111"/></svg>
<svg width="18" height="18" style="position:absolute;left:849.8px;top:166.4px"><circle cx="9" cy="9" r="7.3" fill="none" stroke="#333" stroke-width="1.3"/><path d="M6.6 6.9 Q6.6 4.6 9 4.6 Q11.4 4.6 11.4 6.7 Q11.4 8.1 9.6 8.9 Q9 9.3 9 10.4" fill="none" stroke="#333" stroke-width="1.2"/><circle cx="9" cy="12.9" r="0.8" fill="#333"/></svg>
<div style="position:absolute;left:455px;top:198.7px;width:14px;height:13.5px;border:1.5px solid #444;background:#fff"></div>
<svg width="14" height="14" style="position:absolute;left:455px;top:198.7px"><path d="M2.8 7 L5.8 10.2 L11.4 3.6" fill="none" stroke="#333" stroke-width="1.5"/></svg>
<div style="position:absolute;left:474.5px;top:200.56px;font-size:12.8px;line-height:12.8px;color:#1a1a1a;white-space:pre;letter-spacing:0px;">Check Pending Components on Import</div>
<svg width="18" height="18" style="position:absolute;left:849.8px;top:195.3px"><circle cx="9" cy="9" r="7.3" fill="none" stroke="#333" stroke-width="1.3"/><path d="M6.6 6.9 Q6.6 4.6 9 4.6 Q11.4 4.6 11.4 6.7 Q11.4 8.1 9.6 8.9 Q9 9.3 9 10.4" fill="none" stroke="#333" stroke-width="1.2"/><circle cx="9" cy="12.9" r="0.8" fill="#333"/></svg>
<div style="position:absolute;left:455.5px;top:225.56px;font-size:12.8px;line-height:12.8px;color:#1a1a1a;white-space:pre;letter-spacing:0px;">Components without Teamcenter BOM</div>
<div style="position:absolute;left:0;top:0;width:1920px;height:240.8px;overflow:hidden">
<div style="position:absolute;left:734.4px;top:221.9px;width:114.10000000000002px;height:24.0px;border:1px solid #8a8a8a;background:#fff;overflow:hidden"></div>
<div style="position:absolute;left:740px;top:228.23px;font-size:12.6px;line-height:12.6px;color:#1a1a1a;white-space:pre;letter-spacing:0px;">Reference Only</div>
<svg width="10" height="6" style="position:absolute;left:833.0px;top:231.9px"><path d="M0.5 0.5 L9.5 0.5 L5 5.5 Z" fill="#111"/></svg>
</div>
<svg width="18" height="18" style="position:absolute;left:849.8px;top:221px"><circle cx="9" cy="9" r="7.3" fill="none" stroke="#333" stroke-width="1.3"/><path d="M6.6 6.9 Q6.6 4.6 9 4.6 Q11.4 4.6 11.4 6.7 Q11.4 8.1 9.6 8.9 Q9 9.3 9 10.4" fill="none" stroke="#333" stroke-width="1.2"/><circle cx="9" cy="12.9" r="0.8" fill="#333"/></svg>
<div style="position:absolute;left:441px;top:295.7px;width:441px;height:98px;border:8.3px solid #3d9396;background:#fff"></div>
<div style="position:absolute;left:455px;top:310.6px;width:14px;height:13.5px;border:1.5px solid #444;background:#fff"></div>
<svg width="14" height="14" style="position:absolute;left:455px;top:310.6px"><path d="M2.8 7 L5.8 10.2 L11.4 3.6" fill="none" stroke="#333" stroke-width="1.5"/></svg>
<div style="position:absolute;left:474.5px;top:312.86px;font-size:12.8px;line-height:12.8px;color:#1a1a1a;white-space:pre;letter-spacing:0px;">Add Geometry to Empty Dataset</div>
<svg width="18" height="18" style="position:absolute;left:849.8px;top:308px"><circle cx="9" cy="9" r="7.3" fill="none" stroke="#333" stroke-width="1.3"/><path d="M6.6 6.9 Q6.6 4.6 9 4.6 Q11.4 4.6 11.4 6.7 Q11.4 8.1 9.6 8.9 Q9 9.3 9 10.4" fill="none" stroke="#333" stroke-width="1.2"/><circle cx="9" cy="12.9" r="0.8" fill="#333"/></svg>
<div style="position:absolute;left:455.5px;top:338.56px;font-size:12.8px;line-height:12.8px;color:#1a1a1a;white-space:pre;letter-spacing:0px;">Relation between Assembly and Board</div>
<svg width="18" height="18" style="position:absolute;left:849.8px;top:333.6px"><circle cx="9" cy="9" r="7.3" fill="none" stroke="#333" stroke-width="1.3"/><path d="M6.6 6.9 Q6.6 4.6 9 4.6 Q11.4 4.6 11.4 6.7 Q11.4 8.1 9.6 8.9 Q9 9.3 9 10.4" fill="none" stroke="#333" stroke-width="1.2"/><circle cx="9" cy="12.9" r="0.8" fill="#333"/></svg>
<div style="position:absolute;left:454.8px;top:356.7px;width:413.2px;height:24px;border:1px solid #7d7d7d;background:#fff"></div>
<div style="position:absolute;left:462.6px;top:363.03px;font-size:12.6px;line-height:12.6px;color:#1a1a1a;white-space:pre;letter-spacing:0px;">EDAHasPWB</div>
<div style="position:absolute;left:1307px;top:26.8px;width:506px;height:334.2px;background:#f0f0f0"></div>
<div style="position:absolute;left:1307px;top:2px;width:506px;height:24.8px;background:#255b89"></div>
<div style="position:absolute;left:1311.6px;top:6.800000000000001px;width:16px;height:16px"><svg width="16" height="16" viewBox="0 0 16 16"><path fill="#fff" fill-rule="evenodd" d="M8 0.3 L9.3 2.2 L11.6 1.6 L11.9 3.9 L14.2 4.4 L13.6 6.6 L15.5 8 L13.6 9.4 L14.2 11.6 L11.9 12.1 L11.6 14.4 L9.3 13.8 L8 15.7 L6.7 13.8 L4.4 14.4 L4.1 12.1 L1.8 11.6 L2.4 9.4 L0.5 8 L2.4 6.6 L1.8 4.4 L4.1 3.9 L4.4 1.6 L6.7 2.2 Z M8 4.6 A3.4 3.4 0 1 0 8.01 4.6 Z M8 6.6 A1.4 1.4 0 1 1 7.99 6.6 Z"/></svg></div>
<div style="position:absolute;left:1336.4px;top:8.24px;font-size:14.6px;line-height:14.6px;color:#fff;white-space:pre;letter-spacing:0px;">Manage Pending Components</div>
<div style="position:absolute;left:1773px;top:4px;width:14px;height:20px;font-size:17px;line-height:20px;font-weight:bold;color:#fff;text-align:center">?</div>
<svg width="14" height="14" style="position:absolute;left:1795px;top:7px"><path d="M1.5 1.5 L12.5 12.5 M12.5 1.5 L1.5 12.5" stroke="#fff" stroke-width="2.4"/></svg>
<div style="position:absolute;left:1315.6px;top:35.9px;width:491.4px;height:213.5px;background:#fff;border:1px solid #dadada"></div>
<div style="position:absolute;left:1316.6px;top:36.9px;width:489.4px;height:21.6px;background:#f0f0f0;border-bottom:1.5px solid #d8d8d8"></div>
<div style="position:absolute;left:1324.5px;top:43.03px;font-size:12.6px;line-height:12.6px;color:#1a1a1a;white-space:pre;letter-spacing:0px;">Part Name</div>
<svg width="12" height="7" style="position:absolute;left:1401.5px;top:45.5px"><path d="M0.5 6 L11 6 L5.75 0.5 Z" fill="#111"/></svg>
<div style="position:absolute;left:1513px;top:37px;width:1px;height:212px;background:#e4e4e4"></div>
<div style="position:absolute;left:1316.6px;top:79.375px;width:471.5px;height:1px;background:#efefef"></div>
<div style="position:absolute;left:1321.2px;top:64.10px;font-size:12.05px;line-height:12.05px;color:#1a1a1a;white-space:pre;letter-spacing:0px;">030279/A;1-TCTest.pcbPWB</div>
<div style="position:absolute;left:1316.6px;top:79.875px;width:471.5px;height:21.375px;background:#f8f8f8"></div>
<div style="position:absolute;left:1316.6px;top:100.75px;width:471.5px;height:1px;background:#efefef"></div>
<div style="position:absolute;left:1321.2px;top:85.47px;font-size:12.05px;line-height:12.05px;color:#1a1a1a;white-space:pre;letter-spacing:0px;">101-RES/A;1</div>
<div style="position:absolute;left:1316.6px;top:122.125px;width:471.5px;height:1px;background:#efefef"></div>
<div style="position:absolute;left:1321.2px;top:106.85px;font-size:12.05px;line-height:12.05px;color:#1a1a1a;white-space:pre;letter-spacing:0px;">101-RES/A;1</div>
<div style="position:absolute;left:1316.6px;top:122.625px;width:471.5px;height:21.375px;background:#f8f8f8"></div>
<div style="position:absolute;left:1316.6px;top:143.5px;width:471.5px;height:1px;background:#efefef"></div>
<div style="position:absolute;left:1321.2px;top:128.22px;font-size:12.05px;line-height:12.05px;color:#1a1a1a;white-space:pre;letter-spacing:0px;">101-RES/A;1</div>
<div style="position:absolute;left:1316.6px;top:164.875px;width:471.5px;height:1px;background:#efefef"></div>
<div style="position:absolute;left:1321.2px;top:149.60px;font-size:12.05px;line-height:12.05px;color:#1a1a1a;white-space:pre;letter-spacing:0px;">101-RES/A;1</div>
<div style="position:absolute;left:1316.6px;top:165.375px;width:471.5px;height:21.375px;background:#f8f8f8"></div>
<div style="position:absolute;left:1316.6px;top:186.25px;width:471.5px;height:1px;background:#efefef"></div>
<div style="position:absolute;left:1321.2px;top:170.97px;font-size:12.05px;line-height:12.05px;color:#1a1a1a;white-space:pre;letter-spacing:0px;">101-RES/A;1</div>
<div style="position:absolute;left:1316.6px;top:207.625px;width:471.5px;height:1px;background:#efefef"></div>
<div style="position:absolute;left:1321.2px;top:192.35px;font-size:12.05px;line-height:12.05px;color:#1a1a1a;white-space:pre;letter-spacing:0px;">101-RES/A;1</div>
<div style="position:absolute;left:1316.6px;top:208.125px;width:471.5px;height:21.375px;background:#f8f8f8"></div>
<div style="position:absolute;left:1316.6px;top:229.0px;width:471.5px;height:1px;background:#efefef"></div>
<div style="position:absolute;left:1321.2px;top:213.72px;font-size:12.05px;line-height:12.05px;color:#1a1a1a;white-space:pre;letter-spacing:0px;">101-RES/A;1</div>
<div style="position:absolute;left:1316.6px;top:250.375px;width:471.5px;height:1px;background:#efefef"></div>
<div style="position:absolute;left:1321.2px;top:235.10px;font-size:12.05px;line-height:12.05px;color:#1a1a1a;white-space:pre;letter-spacing:0px;">101-RES/A;1</div>
<div style="position:absolute;left:1513px;top:58.5px;width:1px;height:190px;background:#e4e4e4"></div>
<div style="position:absolute;left:1788.3px;top:58.5px;width:17px;height:190px;background:#f0f0f0"></div>
<div style="position:absolute;left:1789px;top:77px;width:14.4px;height:17.2px;background:#cdcdcd"></div>
<svg width="12" height="8" style="position:absolute;left:1790.5px;top:64px"><path d="M2 6 L6 2 L10 6" fill="none" stroke="#444" stroke-width="2"/></svg>
<svg width="12" height="8" style="position:absolute;left:1790.5px;top:236px"><path d="M2 2 L6 6 L10 2" fill="none" stroke="#444" stroke-width="2"/></svg>
<div style="position:absolute;left:1315.3px;top:252.6px;width:243.70000000000005px;height:28.50000000000003px;background:#f0f0f0;border:1.6px solid #8a8a8a"></div>
<div style="position:absolute;left:1318.3px;top:255.6px;width:237.70000000000005px;height:22.50000000000003px;border:1px dotted #555"></div>
<div style="position:absolute;left:1237.15px;width:400px;text-align:center;top:261.18px;font-size:12.6px;line-height:12.6px;color:#1a1a1a;white-space:pre;letter-spacing:0px;">Add</div>
<div style="position:absolute;left:1561.7px;top:253px;width:243.5999999999999px;height:27.80000000000001px;background:#f0f0f0;border:1.6px solid #8a8a8a"></div>
<div style="position:absolute;left:1483.5px;width:400px;text-align:center;top:261.23px;font-size:12.6px;line-height:12.6px;color:#1a1a1a;white-space:pre;letter-spacing:0px;">Add Interactively</div>
<div style="position:absolute;left:1315.3px;top:284px;width:243.70000000000005px;height:28.399999999999977px;background:#f0f0f0;border:1.6px solid #8a8a8a"></div>
<div style="position:absolute;left:1237.15px;width:400px;text-align:center;top:292.53px;font-size:12.6px;line-height:12.6px;color:#1a1a1a;white-space:pre;letter-spacing:0px;">Add as Non-Geometric</div>
<div style="position:absolute;left:1561.7px;top:284.3px;width:243.5999999999999px;height:27.69999999999999px;background:#f0f0f0;border:1.6px solid #8a8a8a"></div>
<div style="position:absolute;left:1483.5px;width:400px;text-align:center;top:292.48px;font-size:12.6px;line-height:12.6px;color:#1a1a1a;white-space:pre;letter-spacing:0px;">Delete</div>
<div style="position:absolute;left:1730.7px;top:328px;width:69.89999999999986px;height:23.80000000000001px;background:#f0f0f0;border:1.6px solid #2f6ea6"></div>
<div style="position:absolute;left:1565.65px;width:400px;text-align:center;top:334.23px;font-size:12.6px;line-height:12.6px;color:#2f6ea6;white-space:pre;letter-spacing:0px;">Close</div>
</body></html>
